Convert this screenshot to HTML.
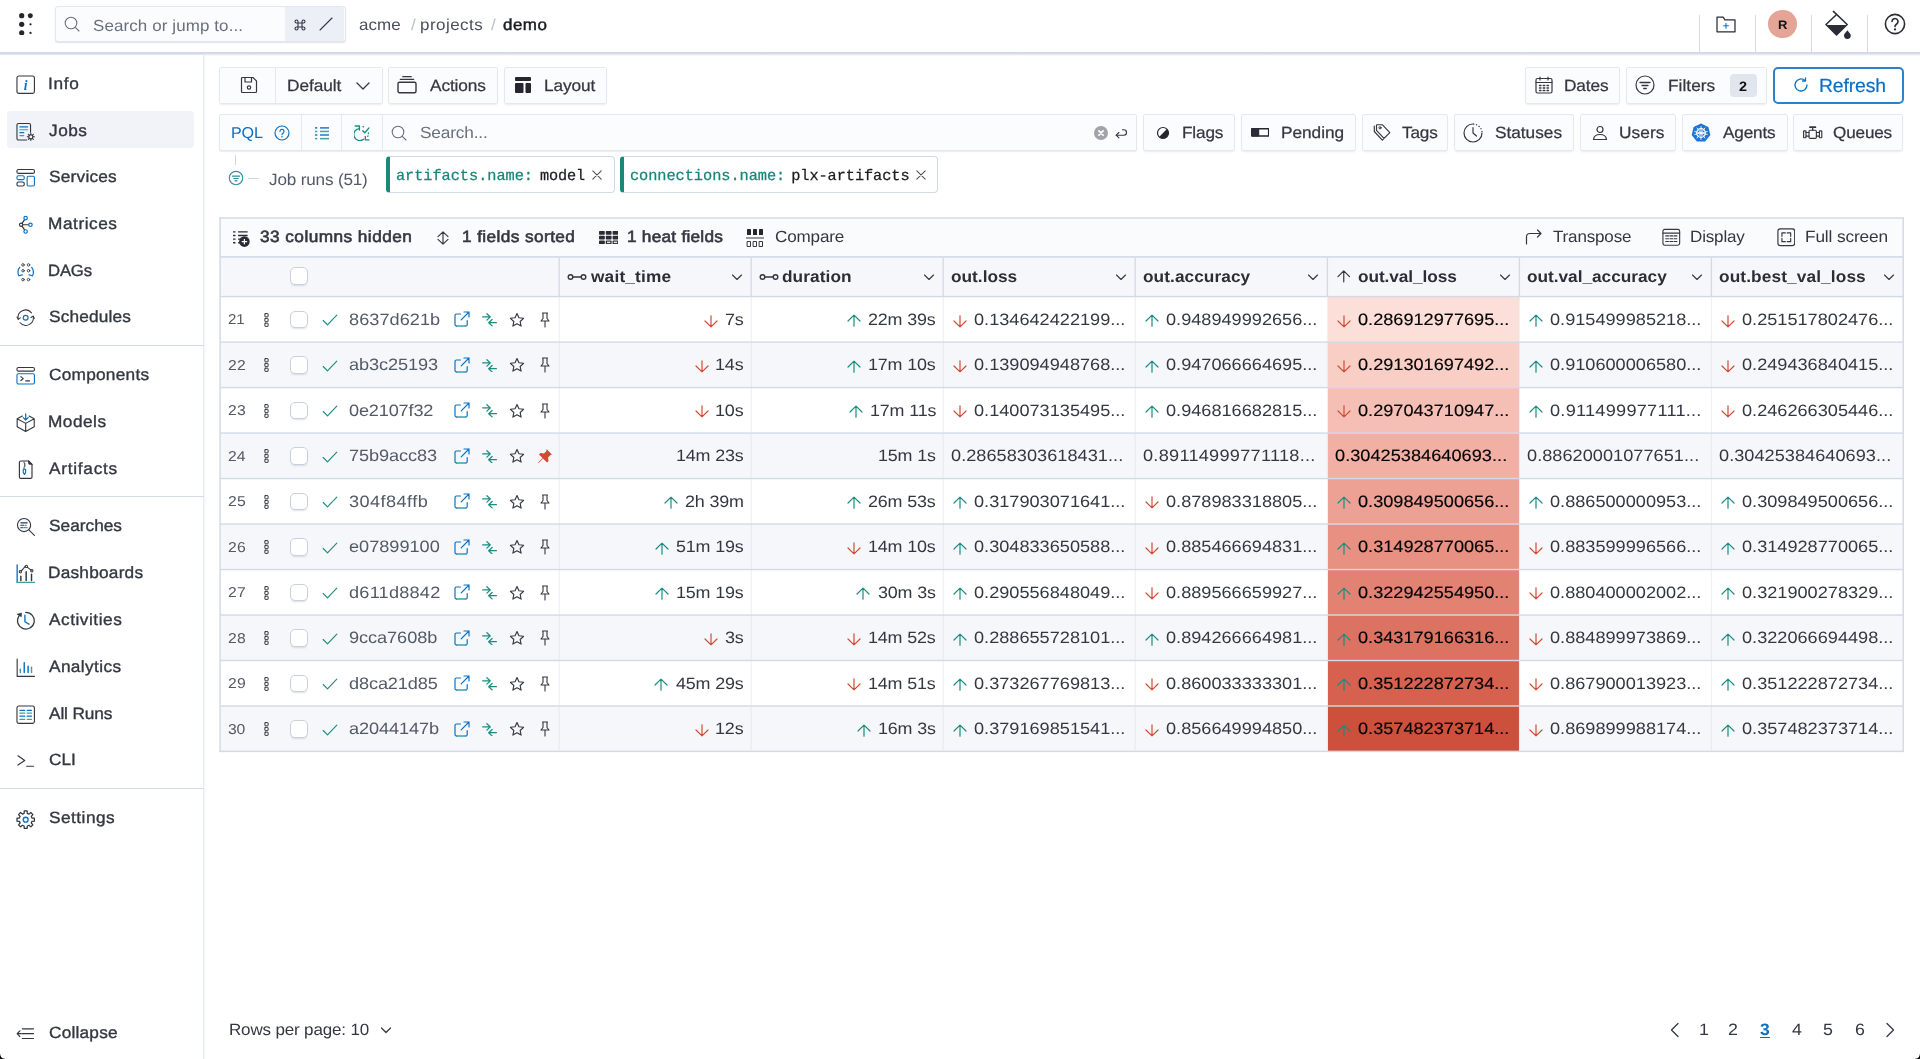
<!DOCTYPE html>
<html lang="en"><head><meta charset="utf-8"><title>demo - Jobs</title>
<style>
*{box-sizing:border-box;margin:0;padding:0}
html,body{width:1920px;height:1059px;overflow:hidden;background:#fff}
body{font-family:"Liberation Sans",sans-serif;color:#343741;font-size:16px;position:relative}
svg{display:block}
.t{position:absolute;white-space:nowrap;line-height:20px;color:#343741;text-rendering:geometricPrecision;transform-origin:0 50%}
.i{position:absolute}
.bx{position:absolute}
#top{position:absolute;left:0;top:0;width:1920px;height:52px;background:#fff}
#topshadow{position:absolute;left:0;top:52px;width:1920px;height:4px;background:linear-gradient(#cfd7e3 0,#d6dde8 40%,#eef1f6 75%,#fff 100%)}
.gsearch{background:#fbfcfd;border:1px solid #e3e8f0;border-radius:3px;box-shadow:0 1px 1px rgba(152,162,179,.3)}
.gsk{background:#eceff5;border-radius:0 2px 2px 0}
.tsep{background:#d3dae6}
.avatar{position:absolute;width:28.400px;height:28.400px;border-radius:50%;background:#e4a496}
#side{position:absolute;left:0;top:55px;width:204px;height:1004px;background:#fff;border-right:1px solid #e6eaf1;box-shadow:1px 0 2px rgba(152,162,179,.14)}
.navact{background:#f1f3f8;border-radius:4px}
.nsep{background:#d3dae6}
.btn{background:#fbfcfd;border:1px solid #e4e9f1;border-radius:2px;box-shadow:0 2px 2px -1px rgba(152,162,179,.22)}
.btn.flat{box-shadow:0 1px 1px rgba(152,162,179,.2)}
.vsep{background:#e4e9f1}
.badge{background:#e0e5ee;border-radius:4px}
.refresh{background:#fff;border:2px solid #2e80c8;border-radius:5px}
.treel{background:#cfd6e2}
.chip{background:#fff;border:1px solid #d3dae6;border-left:4.500px solid #1a8778;border-radius:4px}
.tbl{background:#fff}
.tbar{background:#fafbfd}
.hline{background:#d3dae6}
.thead{background:#f5f7fb}
.alt{background:#f5f7fb}
.rline{background:#d3dae6}
.hcl{background:#d3dae6}
.ccl{background:rgba(211,218,230,.55)}
.cb{background:#fff;border:1px solid #c9cfdb;border-radius:5px;box-shadow:0 2px 2px -1px rgba(152,162,179,.35)}
.corner{position:absolute;bottom:0;width:5px;height:5px;background:#000}
.corner.bl{left:0;-webkit-mask:radial-gradient(circle at 100% 0,transparent 4.300px,#000 5.300px);mask:radial-gradient(circle at 100% 0,transparent 4.300px,#000 5.300px)}
.corner.br{right:0;-webkit-mask:radial-gradient(circle at 0 0,transparent 4.300px,#000 5.300px);mask:radial-gradient(circle at 0 0,transparent 4.300px,#000 5.300px)}
.grid{position:absolute;left:0;top:0;pointer-events:none}
#w{position:absolute;left:0;top:0;width:1920px;height:1059px;will-change:transform;overflow:hidden}

</style></head><body><div id="w">
<div id="top"></div><div id="topshadow"></div>
<span class="i" style="left:18.8px;top:12.7px"><svg width="14" height="22.6" viewBox="0 0 14 22.6" fill="none" ><g fill="#25262d"><circle cx="2.700" cy="2.700" r="2.600"/><circle cx="11.300" cy="2.700" r="2.500"/><circle cx="2.700" cy="11.300" r="2.600"/><circle cx="11.500" cy="11.300" r="1.150"/><circle cx="2.700" cy="19.900" r="2.600"/><circle cx="11.500" cy="19.900" r="1.150"/></g></svg></span>
<div class="bx gsearch" style="left:55px;top:6px;width:290.5px;height:36.3px;"></div>
<div class="bx gsk" style="left:284.6px;top:7px;width:59.9px;height:34.3px;"></div>
<span class="i" style="left:64.4px;top:16.2px"><svg width="16" height="16" viewBox="0 0 16 16" fill="none" ><circle cx="7" cy="7" r="5.800" stroke="#69707d" stroke-width="1.1" stroke-linecap="round" stroke-linejoin="round"/><path d="M11.300 11.300l3.700 3.700" stroke="#69707d" stroke-width="1.1" stroke-linecap="round" stroke-linejoin="round"/></svg></span>
<span class="t" style="left:93.34px;top:17px;font-size:16px;letter-spacing:0.1px;transform:scaleX(1.06);color:#69707d;">Search or jump to...</span>
<span class="i" style="left:294px;top:19px"><svg width="12" height="12" viewBox="0 0 12 12" fill="none" ><path d="M4 4h4v4H4zM4 4V2.500a1.500 1.500 0 1 0-1.500 1.500zM8 4V2.500a1.500 1.500 0 1 1 1.500 1.500zM4 8v1.500a1.500 1.500 0 1 1-1.500-1.500zM8 8v1.500a1.500 1.500 0 1 0 1.500-1.500z" stroke="#343741" stroke-width="1.1" stroke-linecap="round" stroke-linejoin="round"/></svg></span>
<span class="i" style="left:317.8px;top:15.7px"><svg width="16" height="16" viewBox="0 0 16 16" fill="none" ><path d="M2 14L14 2" stroke="#343741" stroke-width="1.1" stroke-linecap="round" stroke-linejoin="round"/></svg></span>
<span class="t" style="left:358.92px;top:16px;font-size:16px;letter-spacing:0.09px;transform:scaleX(1.06);color:#4a4f5b;">acme</span>
<span class="t" style="left:410.7px;top:16px;font-size:16px;transform:scaleX(1.06);color:#b9c0cc;">/</span>
<span class="t" style="left:420.28px;top:16px;font-size:16px;letter-spacing:0.44px;transform:scaleX(1.06);color:#4a4f5b;">projects</span>
<span class="t" style="left:490.7px;top:16px;font-size:16px;transform:scaleX(1.06);color:#b9c0cc;">/</span>
<span class="t" style="left:502.82px;top:16px;font-size:16px;letter-spacing:0.46px;transform:scaleX(1.06);color:#1a1c21;-webkit-text-stroke:0.45px #1a1c21;">demo</span>
<div class="bx tsep" style="left:1698.5px;top:15px;width:1px;height:38px;"></div>
<div class="bx tsep" style="left:1754.5px;top:15px;width:1px;height:38px;"></div>
<div class="bx tsep" style="left:1810.8px;top:15px;width:1px;height:38px;"></div>
<div class="bx tsep" style="left:1866.8px;top:15px;width:1px;height:38px;"></div>
<span class="i" style="left:1716.3px;top:15.9px"><svg width="20" height="17" viewBox="0 0 20 17" fill="none" ><path d="M1 1.200h6.200l1.700 2.600h10.100v12H1z" stroke="#2b2d36" stroke-width="1.25" stroke-linecap="round" stroke-linejoin="round"/><path d="M10 7.300v4.800M7.600 9.700h4.800" stroke="#0b72c4" stroke-width="1.1" stroke-linecap="round" stroke-linejoin="round"/></svg></span>
<div class="avatar" style="left:1768.3px;top:9.8px"></div>
<span class="t" style="left:1777.75px;top:15px;font-size:12.3px;transform:scaleX(1.06);font-weight:bold;color:#111;">R</span>
<span class="i" style="left:1825px;top:9.5px"><svg width="27" height="29" viewBox="0 0 27 29" fill="none" ><path d="M8.400 1.400L22.200 14.500 11.500 24.900 1 14.500 11.300 4.800" stroke="#2b2d36" stroke-width="1.5" stroke-linecap="round" stroke-linejoin="round"/><path d="M1.800 15h19.800L11.500 24.900z" fill="#2b2d36"/><path d="M22.400 20.300c-2 2.600-3.400 3.700-3.400 5.200a3.400 3.400 0 0 0 6.800 0c0-1.500-1.400-2.600-3.400-5.200z" fill="#2b2d36"/></svg></span>
<span class="i" style="left:1883.5px;top:13.2px"><svg width="22" height="22" viewBox="0 0 22 22" fill="none" ><circle cx="11" cy="11" r="9.600" stroke="#2b2d36" stroke-width="1.6" stroke-linecap="round" stroke-linejoin="round"/><path d="M8 8.500a3 3 0 1 1 4.700 2.500c-1.200.800-1.700 1.300-1.700 2.600" stroke="#2b2d36" stroke-width="1.6" stroke-linecap="round" stroke-linejoin="round"/><circle cx="11" cy="16.400" r="1.100" fill="#2b2d36"/></svg></span>
<div id="side"></div>
<div class="bx navact" style="left:7px;top:111px;width:186.6px;height:37px;"></div>
<span class="i" style="left:15.8px;top:74.9px"><svg width="19.4" height="19.4" viewBox="0 0 20 20" fill="none" ><rect x="1" y="1" width="18" height="18" rx="2" stroke="#343741" stroke-width="1.15" stroke-linecap="round" stroke-linejoin="round"/><text x="10" y="15" font-family="Liberation Serif" font-style="italic" font-weight="bold" font-size="14" text-anchor="middle" fill="#0b72c4">i</text></svg></span>
<span class="t" style="left:48.04px;top:74px;font-size:16.3px;letter-spacing:0.68px;transform:scaleX(1.06);-webkit-text-stroke:0.35px #343741;">Info</span>
<span class="i" style="left:15.8px;top:121.7px"><svg width="19.4" height="19.4" viewBox="0 0 20 20" fill="none" ><path d="M11 18.5H2.5a1.5 1.5 0 0 1-1.5-1.5V3A1.5 1.5 0 0 1 2.5 1.500h11A1.500 1.500 0 0 1 15 3v7.500" stroke="#343741" stroke-width="1.15" stroke-linecap="round" stroke-linejoin="round"/><path d="M4 5h8M4 11h4" stroke="#0b72c4" stroke-width="1.2" stroke-linecap="round" stroke-linejoin="round"/><path d="M4 8h8M4 14h4" stroke="#3f9fa3" stroke-width="1.2" stroke-linecap="round" stroke-linejoin="round"/><circle cx="15.300" cy="15.300" r="2.100" stroke="#343741" stroke-width="1.1" stroke-linecap="round" stroke-linejoin="round"/><path d="M15.300 11.600v1.400M15.300 17.600v1.400M11.600 15.300h1.400M17.600 15.300h1.400M12.700 12.700l1 1M16.900 16.900l1 1M12.700 17.900l1-1M16.900 13.700l1-1" stroke="#343741" stroke-width="1.1" stroke-linecap="round" stroke-linejoin="round"/></svg></span>
<span class="t" style="left:49.34px;top:121px;font-size:16.3px;letter-spacing:0.47px;transform:scaleX(1.06);-webkit-text-stroke:0.35px #343741;">Jobs</span>
<span class="i" style="left:15.8px;top:168.3px"><svg width="19.4" height="19.4" viewBox="0 0 20 20" fill="none" ><rect x="1" y="1.500" width="18" height="4" rx="1.500" stroke="#343741" stroke-width="1.15" stroke-linecap="round" stroke-linejoin="round"/><rect x="1" y="14.500" width="7.500" height="4" rx="1.500" stroke="#343741" stroke-width="1.15" stroke-linecap="round" stroke-linejoin="round"/><rect x="1" y="8" width="7.500" height="4" rx="1.500" stroke="#0b72c4" stroke-width="1.15" stroke-linecap="round" stroke-linejoin="round"/><rect x="11.500" y="8.500" width="7.500" height="10" rx="1.200" stroke="#0b72c4" stroke-width="1.15" stroke-linecap="round" stroke-linejoin="round"/></svg></span>
<span class="t" style="left:48.82px;top:167px;font-size:16.3px;letter-spacing:0.21px;transform:scaleX(1.06);-webkit-text-stroke:0.35px #343741;">Services</span>
<span class="i" style="left:15.8px;top:215px"><svg width="19.4" height="19.4" viewBox="0 0 20 20" fill="none" ><circle cx="5.300" cy="10.100" r="1.700" stroke="#343741" stroke-width="1.2" stroke-linecap="round" stroke-linejoin="round"/><path d="M7 10.100h6M6.300 8.700l2.500-3.900M6.300 11.500l2.500 3.900" stroke="#343741" stroke-width="1.2" stroke-linecap="round" stroke-linejoin="round"/><circle cx="9.900" cy="3.200" r="1.800" stroke="#0b72c4" stroke-width="1.2" stroke-linecap="round" stroke-linejoin="round"/><circle cx="14.900" cy="10.100" r="1.800" stroke="#0b72c4" stroke-width="1.2" stroke-linecap="round" stroke-linejoin="round"/><circle cx="9.900" cy="17" r="1.800" stroke="#0b72c4" stroke-width="1.2" stroke-linecap="round" stroke-linejoin="round"/></svg></span>
<span class="t" style="left:48.22px;top:214px;font-size:16.3px;letter-spacing:0.51px;transform:scaleX(1.06);-webkit-text-stroke:0.35px #343741;">Matrices</span>
<span class="i" style="left:15.8px;top:262.4px"><svg width="19.4" height="19.4" viewBox="0 0 20 20" fill="none" ><g stroke="#343741" stroke-width="0.9" stroke-linecap="round" stroke-linejoin="round"><circle cx="7.200" cy="3" r="1.300"/><circle cx="12.900" cy="3" r="1.300"/><circle cx="7.200" cy="9" r="1.300"/><circle cx="12.900" cy="9" r="1.300"/><circle cx="7.200" cy="18.200" r="1.300"/><circle cx="12.900" cy="18.200" r="1.300"/></g><path d="M3.800 5.500C1.600 8 1.600 12 3 14.200M3 14.200l3.500-1M16.200 5.500c2.200 2.500 2.200 6.500.8 8.700M17 14.200l-3.500-1" stroke="#0b72c4" stroke-width="1.3" stroke-linecap="round" stroke-linejoin="round"/></svg></span>
<span class="t" style="left:48.26px;top:261px;font-size:16.3px;letter-spacing:-0.15px;transform:scaleX(1.024);-webkit-text-stroke:0.35px #343741;">DAGs</span>
<span class="i" style="left:15.8px;top:308.4px"><svg width="19.4" height="19.4" viewBox="0 0 20 20" fill="none" ><path d="M2.300 11.500A7.800 7.800 0 0 1 16 5M17.700 8.500A7.800 7.800 0 0 1 4 15" stroke="#343741" stroke-width="1.05" stroke-linecap="round" stroke-linejoin="round"/><path d="M1 9.300l1.300 2.400 2.200-1.500M19 10.700l-1.300-2.400-2.200 1.500" stroke="#343741" stroke-width="1.05" stroke-linecap="round" stroke-linejoin="round"/><circle cx="10" cy="10" r="2.500" stroke="#0b72c4" stroke-width="1.25" stroke-linecap="round" stroke-linejoin="round"/></svg></span>
<span class="t" style="left:48.82px;top:307px;font-size:16.3px;letter-spacing:0.16px;transform:scaleX(1.06);-webkit-text-stroke:0.35px #343741;">Schedules</span>
<span class="i" style="left:15.8px;top:366px"><svg width="19.4" height="19.4" viewBox="0 0 20 20" fill="none" ><rect x="1" y="1.500" width="18" height="3.800" rx="1.500" stroke="#343741" stroke-width="1.15" stroke-linecap="round" stroke-linejoin="round"/><rect x="1" y="8" width="18" height="10.500" rx="1.500" stroke="#0b72c4" stroke-width="1.15" stroke-linecap="round" stroke-linejoin="round"/><path d="M5 11l2.500 2L5 15M10 15.300h4" stroke="#343741" stroke-width="1.2" stroke-linecap="round" stroke-linejoin="round"/></svg></span>
<span class="t" style="left:48.74px;top:365px;font-size:16.3px;letter-spacing:0.23px;transform:scaleX(1.06);-webkit-text-stroke:0.35px #343741;">Components</span>
<span class="i" style="left:15.8px;top:412.7px"><svg width="19.4" height="19.4" viewBox="0 0 20 20" fill="none" ><path d="M6.500 3.200L1.200 6v8.300L10 19l8.800-4.700V6l-5.300-2.800M1.200 6L10 10.700 18.800 6M10 10.700V19" stroke="#343741" stroke-width="1.15" stroke-linecap="round" stroke-linejoin="round"/><path d="M10 1v6M7.500 4.800L10 7.200l2.500-2.400" stroke="#0b72c4" stroke-width="1.3" stroke-linecap="round" stroke-linejoin="round"/></svg></span>
<span class="t" style="left:48.22px;top:412px;font-size:16.3px;letter-spacing:0.45px;transform:scaleX(1.06);-webkit-text-stroke:0.35px #343741;">Models</span>
<span class="i" style="left:15.8px;top:459.8px"><svg width="19.4" height="19.4" viewBox="0 0 20 20" fill="none" ><path d="M13 1H5A1.500 1.500 0 0 0 3.500 2.500v15A1.500 1.500 0 0 0 5 19h10a1.500 1.500 0 0 0 1.500-1.500V4.500z" stroke="#343741" stroke-width="1.2" stroke-linecap="round" stroke-linejoin="round"/><path d="M13 1v2.500a1 1 0 0 0 1 1h2.500z" fill="#343741" stroke="#343741" stroke-width="0.8" stroke-linecap="round" stroke-linejoin="round"/><path d="M8.300 2v1.300l1.400.9-1.400.9 1.400.9-1.400.9V9" stroke="#343741" stroke-width="0.9" stroke-linecap="round" stroke-linejoin="round"/><path d="M7.500 9.500h2.400V13L8.700 15 7.500 13z" stroke="#0b72c4" stroke-width="1.2" stroke-linecap="round" stroke-linejoin="round"/></svg></span>
<span class="t" style="left:49.1px;top:459px;font-size:16.3px;letter-spacing:0.69px;transform:scaleX(1.06);-webkit-text-stroke:0.35px #343741;">Artifacts</span>
<span class="i" style="left:15.8px;top:517.3px"><svg width="19.4" height="19.4" viewBox="0 0 20 20" fill="none" ><circle cx="8.300" cy="8.300" r="6.800" stroke="#343741" stroke-width="1.15" stroke-linecap="round" stroke-linejoin="round"/><path d="M13.500 13.500L19 19" stroke="#343741" stroke-width="1.15" stroke-linecap="round" stroke-linejoin="round"/><path d="M5 6h6.500M5 8.500h3" stroke="#343741" stroke-width="1.2" stroke-linecap="round" stroke-linejoin="round"/><path d="M9.500 8.500h1M5 11h2" stroke="#0b72c4" stroke-width="1.2" stroke-linecap="round" stroke-linejoin="round"/><path d="M8 11h3.500" stroke="#3f9fa3" stroke-width="1.2" stroke-linecap="round" stroke-linejoin="round"/></svg></span>
<span class="t" style="left:48.82px;top:516px;font-size:16.3px;letter-spacing:0.01px;transform:scaleX(1.06);-webkit-text-stroke:0.35px #343741;">Searches</span>
<span class="i" style="left:15.8px;top:564px"><svg width="19.4" height="19.4" viewBox="0 0 20 20" fill="none" ><path d="M1.200 1v18" stroke="#0b72c4" stroke-width="1.4" stroke-linecap="round" stroke-linejoin="round"/><path d="M1.200 19H19" stroke="#3f9fa3" stroke-width="1.4" stroke-linecap="round" stroke-linejoin="round"/><path d="M5 17v-4.500M10.500 17V8M16 17v-6.500" stroke="#343741" stroke-width="1.5" stroke-linecap="round" stroke-linejoin="round"/><path d="M5.500 7l4-4.500M12 3.500l3.500 2.800" stroke="#343741" stroke-width="1.1" stroke-linecap="round" stroke-linejoin="round"/><circle cx="4.500" cy="8" r="1.200" stroke="#343741" stroke-width="1.1" stroke-linecap="round" stroke-linejoin="round"/><circle cx="10.700" cy="2.500" r="1.200" stroke="#343741" stroke-width="1.1" stroke-linecap="round" stroke-linejoin="round"/><circle cx="16.300" cy="7" r="1.200" stroke="#343741" stroke-width="1.1" stroke-linecap="round" stroke-linejoin="round"/></svg></span>
<span class="t" style="left:48.22px;top:563px;font-size:16.3px;letter-spacing:0.21px;transform:scaleX(1.06);-webkit-text-stroke:0.35px #343741;">Dashboards</span>
<span class="i" style="left:15.8px;top:610.7px"><svg width="19.4" height="19.4" viewBox="0 0 20 20" fill="none" ><path d="M10 1.400A8.600 8.600 0 1 1 3.200 5" stroke="#343741" stroke-width="1.3" stroke-linecap="round" stroke-linejoin="round"/><path d="M1.100 3.400L5.700 2 5.500 5.900z" fill="#343741" stroke="#343741" stroke-width=".600" stroke-linejoin="round"/><path d="M9.200 4.300v6.800l4.200 2.500" stroke="#0b72c4" stroke-width="1.4" stroke-linecap="round" stroke-linejoin="round"/></svg></span>
<span class="t" style="left:49.1px;top:610px;font-size:16.3px;letter-spacing:0.49px;transform:scaleX(1.06);-webkit-text-stroke:0.35px #343741;">Activities</span>
<span class="i" style="left:15.8px;top:657.8px"><svg width="19.4" height="19.4" viewBox="0 0 20 20" fill="none" ><path d="M1.200 1v18H19" stroke="#343741" stroke-width="1.15" stroke-linecap="round" stroke-linejoin="round"/><path d="M8.500 15V5M12.500 15V8.500" stroke="#0b72c4" stroke-width="1.5" stroke-linecap="round" stroke-linejoin="round"/><path d="M4.500 15v-3M16 15V9.500" stroke="#3f9fa3" stroke-width="1.5" stroke-linecap="round" stroke-linejoin="round"/><path d="M4.500 12.500v-1" stroke="#3f9fa3" stroke-width="1.5" stroke-linecap="round" stroke-linejoin="round"/></svg></span>
<span class="t" style="left:49.1px;top:657px;font-size:16.3px;letter-spacing:0.36px;transform:scaleX(1.06);-webkit-text-stroke:0.35px #343741;">Analytics</span>
<span class="i" style="left:15.8px;top:704.6px"><svg width="19.4" height="19.4" viewBox="0 0 20 20" fill="none" ><rect x="1" y="1" width="18" height="18" rx="2" stroke="#343741" stroke-width="1.15" stroke-linecap="round" stroke-linejoin="round"/><path d="M4 5.500h5M11.500 5.500H16M4 11.500h5M11.500 11.500H16" stroke="#0b72c4" stroke-width="1.3" stroke-linecap="round" stroke-linejoin="round"/><path d="M4 8.500h5M11.500 8.500H16M4 14.800h5M11.500 14.800H16" stroke="#3f9fa3" stroke-width="1.3" stroke-linecap="round" stroke-linejoin="round"/></svg></span>
<span class="t" style="left:49.1px;top:704px;font-size:16.3px;letter-spacing:-0.12px;transform:scaleX(1.06);-webkit-text-stroke:0.35px #343741;">All Runs</span>
<span class="i" style="left:15.8px;top:750.8px"><svg width="19.4" height="19.4" viewBox="0 0 20 20" fill="none" ><path d="M2 5l7 4.700L2 14.500M11 15.700h7" stroke="#343741" stroke-width="1.2" stroke-linecap="round" stroke-linejoin="round"/></svg></span>
<span class="t" style="left:48.74px;top:750px;font-size:16.3px;letter-spacing:-0.06px;transform:scaleX(1.06);-webkit-text-stroke:0.35px #343741;">CLI</span>
<span class="i" style="left:15.9px;top:809.5px"><svg width="19.4" height="19.4" viewBox="0 0 20 20" fill="none" ><path d="M8.38 3.50 L8.50 1.02 L11.50 1.02 L11.62 3.50 L13.45 4.26 L15.28 2.59 L17.41 4.72 L15.74 6.55 L16.50 8.38 L18.98 8.50 L18.98 11.50 L16.50 11.62 L15.74 13.45 L17.41 15.28 L15.28 17.41 L13.45 15.74 L11.62 16.50 L11.50 18.98 L8.50 18.98 L8.38 16.50 L6.55 15.74 L4.72 17.41 L2.59 15.28 L4.26 13.45 L3.50 11.62 L1.02 11.50 L1.02 8.50 L3.50 8.38 L4.26 6.55 L2.59 4.72 L4.72 2.59 L6.55 4.26z" stroke="#343741" stroke-width="1.3" stroke-linecap="round" stroke-linejoin="round"/><circle cx="10" cy="10" r="2.500" stroke="#0b72c4" stroke-width="1.4" stroke-linecap="round" stroke-linejoin="round"/></svg></span>
<span class="t" style="left:48.82px;top:808px;font-size:16.3px;letter-spacing:0.45px;transform:scaleX(1.06);-webkit-text-stroke:0.35px #343741;">Settings</span>
<span class="i" style="left:15.8px;top:1023.7px"><svg width="19.4" height="19.4" viewBox="0 0 20 20" fill="none" ><path d="M6.500 5H18M6.500 10H18M6.500 15H18" stroke="#343741" stroke-width="1.2" stroke-linecap="round" stroke-linejoin="round"/><path d="M1.500 10h4M4 7L1.200 10 4 13" stroke="#343741" stroke-width="1.2" stroke-linecap="round" stroke-linejoin="round"/></svg></span>
<span class="t" style="left:48.74px;top:1023px;font-size:16.3px;letter-spacing:0.19px;transform:scaleX(1.06);-webkit-text-stroke:0.35px #343741;">Collapse</span>
<div class="bx nsep" style="left:0px;top:344.5px;width:203.5px;height:1.2px;"></div>
<div class="bx nsep" style="left:0px;top:495.5px;width:203.5px;height:1.2px;"></div>
<div class="bx nsep" style="left:0px;top:787.5px;width:203.5px;height:1.2px;"></div>
<div class="bx btn" style="left:219px;top:67px;width:163.8px;height:37px;"></div>
<div class="bx vsep" style="left:274.5px;top:68px;width:1px;height:35px;"></div>
<span class="i" style="left:239.5px;top:76.4px"><svg width="18" height="18" viewBox="0 0 18 18" fill="none" ><path d="M2.500 1.500h10.500l3.500 3.500v10.500a1 1 0 0 1-1 1h-13a1 1 0 0 1-1-1v-13a1 1 0 0 1 1-1z" stroke="#343741" stroke-width="1.2" stroke-linecap="round" stroke-linejoin="round"/><path d="M5 1.500v4.500h6.500V1.500" stroke="#343741" stroke-width="1.2" stroke-linecap="round" stroke-linejoin="round"/><circle cx="9" cy="11.500" r="1.700" stroke="#343741" stroke-width="1.2" stroke-linecap="round" stroke-linejoin="round"/></svg></span>
<span class="t" style="left:286.92px;top:76px;font-size:16.3px;letter-spacing:-0.05px;transform:scaleX(1.06);-webkit-text-stroke:0.25px #343741;">Default</span>
<span class="i" style="left:355.2px;top:78px"><svg width="16" height="16" viewBox="0 0 16 16" fill="none" ><path d="M2 5l6 6 6-6" stroke="#343741" stroke-width="1.3" stroke-linecap="round" stroke-linejoin="round"/></svg></span>
<div class="bx btn" style="left:388.3px;top:67px;width:110px;height:37px;"></div>
<span class="i" style="left:397.3px;top:75.2px"><svg width="20" height="20" viewBox="0 0 20 20" fill="none" ><rect x="1" y="7.300" width="18" height="10.500" rx="1.500" stroke="#343741" stroke-width="1.4" stroke-linecap="round" stroke-linejoin="round"/><path d="M3.300 4.300h13.400M5.800 1.700h8.400" stroke="#343741" stroke-width="1.3" stroke-linecap="round" stroke-linejoin="round"/></svg></span>
<span class="t" style="left:429.6px;top:76px;font-size:16.3px;letter-spacing:-0.1px;transform:scaleX(1.06);-webkit-text-stroke:0.25px #343741;">Actions</span>
<div class="bx btn" style="left:503.8px;top:67px;width:103.2px;height:37px;"></div>
<span class="i" style="left:514.4px;top:76.3px"><svg width="18" height="18" viewBox="0 0 18 18" fill="none" ><g fill="#26272e"><rect x="1" y="1" width="16" height="4" rx="1"/><rect x="1" y="7" width="8.500" height="10" rx="1"/><rect x="11.500" y="7" width="5.500" height="10" rx="1"/></g></svg></span>
<span class="t" style="left:543.82px;top:76px;font-size:16.3px;letter-spacing:-0.12px;transform:scaleX(1.06);-webkit-text-stroke:0.25px #343741;">Layout</span>
<div class="bx btn" style="left:1524.5px;top:67px;width:95.5px;height:37px;"></div>
<span class="i" style="left:1535.3px;top:76.2px"><svg width="18" height="18" viewBox="0 0 18 18" fill="none" ><rect x="1" y="2.500" width="16" height="14.500" rx="1.500" stroke="#343741" stroke-width="1.2" stroke-linecap="round" stroke-linejoin="round"/><path d="M1 6.500h16M5 1v3M13 1v3" stroke="#343741" stroke-width="1.2" stroke-linecap="round" stroke-linejoin="round"/><path d="M4.500 9.500h1.500M8.200 9.500h1.600M12 9.500h1.500M4.500 12h1.500M8.200 12h1.600M12 12h1.500M4.500 14.500h1.500M8.200 14.500h1.600M12 14.500h1.500" stroke="#343741" stroke-width="1.3" stroke-linecap="round" stroke-linejoin="round"/></svg></span>
<span class="t" style="left:1564.22px;top:76px;font-size:16.3px;letter-spacing:-0.1px;transform:scaleX(1.06);-webkit-text-stroke:0.25px #343741;">Dates</span>
<div class="bx btn" style="left:1625.8px;top:67px;width:141.5px;height:37px;"></div>
<span class="i" style="left:1635.3px;top:75.3px"><svg width="20" height="20" viewBox="0 0 20 20" fill="none" ><circle cx="10" cy="10" r="9" stroke="#343741" stroke-width="1.2" stroke-linecap="round" stroke-linejoin="round"/><path d="M5 7.500h10M7 10.500h6M8.700 13.500h2.600" stroke="#343741" stroke-width="1.3" stroke-linecap="round" stroke-linejoin="round"/></svg></span>
<span class="t" style="left:1668.42px;top:76px;font-size:16.3px;letter-spacing:0.03px;transform:scaleX(1.06);-webkit-text-stroke:0.25px #343741;">Filters</span>
<div class="bx badge" style="left:1730px;top:74px;width:26.8px;height:23.3px;"></div>
<span class="t" style="left:1738.87px;top:77px;font-size:13.6px;transform:scaleX(1.06);font-weight:bold;color:#111;">2</span>
<div class="bx refresh" style="left:1773px;top:67px;width:130.5px;height:37px;"></div>
<span class="i" style="left:1793.3px;top:77.2px"><svg width="16" height="16" viewBox="0 0 16 16" fill="none" ><path d="M14 8a6 6 0 1 1-2-4.500" stroke="#0b72c4" stroke-width="1.3" stroke-linecap="round" stroke-linejoin="round"/><path d="M12.500 1v3h-3" stroke="#0b72c4" stroke-width="1.3" stroke-linecap="round" stroke-linejoin="round"/></svg></span>
<span class="t" style="left:1819.25px;top:77px;font-size:19px;letter-spacing:-0.15px;transform:scaleX(1.02);color:#0b6fc2;-webkit-text-stroke:0.2px #0b6fc2;">Refresh</span>
<div class="bx btn flat" style="left:219px;top:114px;width:918.3px;height:37px;"></div>
<div class="bx vsep" style="left:301.2px;top:115px;width:1px;height:35px;"></div>
<div class="bx vsep" style="left:341.4px;top:115px;width:1px;height:35px;"></div>
<div class="bx vsep" style="left:381.5px;top:115px;width:1px;height:35px;"></div>
<span class="t" style="left:231.01px;top:124px;font-size:15.6px;letter-spacing:-0.15px;transform:scaleX(1.0348);color:#0b6fc2;">PQL</span>
<span class="i" style="left:274.1px;top:124.6px"><svg width="16" height="16" viewBox="0 0 16 16" fill="none" ><circle cx="8" cy="8" r="7" stroke="#0b72c4" stroke-width="1.2" stroke-linecap="round" stroke-linejoin="round"/><path d="M6 6.300a2 2 0 1 1 3.200 1.600c-.8.600-1.200.9-1.200 1.800" stroke="#0b72c4" stroke-width="1.2" stroke-linecap="round" stroke-linejoin="round"/><circle cx="8" cy="11.800" r=".8" fill="#0b72c4"/></svg></span>
<span class="i" style="left:314.85px;top:127.1px"><svg width="14.5" height="13" viewBox="0 0 14.5 13" fill="none" ><g fill="#0b72c4"><rect x="0" y=".200" width="2.300" height="1.400"/><rect x="5" y=".200" width="9.500" height="1.400"/><rect x="0" y="7.300" width="2.300" height="1.400"/><rect x="5" y="7.300" width="9.500" height="1.400"/></g><g fill="#4b9fa8"><rect x="0" y="3.700" width="2.300" height="1.500"/><rect x="5" y="3.700" width="9.500" height="1.500"/><rect x="0" y="10.900" width="2.300" height="1.500"/><rect x="5" y="10.900" width="9.500" height="1.500"/></g></svg></span>
<span class="i" style="left:354.4px;top:125.4px"><svg width="16" height="16" viewBox="0 0 16 16" fill="none" ><path d="M5.200 3.600A6 6 0 1 0 9.500 14.300" stroke="#1c8c80" stroke-width="1.35" stroke-linecap="round" stroke-linejoin="round"/><path d="M1.200 1h4.200v4" stroke="#1c8c80" stroke-width="1.35" stroke-linecap="round" stroke-linejoin="round"/><path d="M11.300 11.300v3.600h3.600" stroke="#1c8c80" stroke-width="1.35" stroke-linecap="round" stroke-linejoin="round"/><path d="M14.300 7.500c.3 1.500.1 3-.8 4.300" stroke="#1c8c80" stroke-width="1.300" stroke-dasharray="1.600 1.300"/><path d="M8.500 1.600c1 0 2 .3 2.800.8" stroke="#1c8c80" stroke-width="1.300" stroke-dasharray="1.600 1.300"/><path d="M8.800 5.800l2 2 4.200-4.900" stroke="#1c8c80" stroke-width="1.35" stroke-linecap="round" stroke-linejoin="round"/></svg></span>
<span class="i" style="left:390.7px;top:124.7px"><svg width="16" height="16" viewBox="0 0 16 16" fill="none" ><circle cx="7" cy="7" r="5.800" stroke="#69707d" stroke-width="1.1" stroke-linecap="round" stroke-linejoin="round"/><path d="M11.300 11.300l3.700 3.700" stroke="#69707d" stroke-width="1.1" stroke-linecap="round" stroke-linejoin="round"/></svg></span>
<span class="t" style="left:420.02px;top:123px;font-size:16.3px;letter-spacing:-0.15px;transform:scaleX(1.0585);color:#69707d;">Search...</span>
<span class="i" style="left:1093.5px;top:125.7px"><svg width="14" height="14" viewBox="0 0 14 14" fill="none" ><circle cx="7" cy="7" r="7" fill="#a0a3a8"/><path d="M4.900 4.900l4.200 4.200M9.100 4.900L4.900 9.100" stroke="#fff" stroke-width="1.700" stroke-linecap="round"/></svg></span>
<span class="i" style="left:1114.7px;top:128.1px"><svg width="13" height="11" viewBox="0 0 13 11" fill="none" ><path d="M1.200 7.200h7.600a2.700 2.700 0 0 0 0-5.400H7.500" stroke="#343741" stroke-width="1.1" stroke-linecap="round" stroke-linejoin="round"/><path d="M3.900 4.500L1.200 7.200l2.700 2.700" stroke="#343741" stroke-width="1.1" stroke-linecap="round" stroke-linejoin="round"/></svg></span>
<div class="bx btn" style="left:1142.7px;top:114px;width:92.3px;height:37px;"></div>
<span class="i" style="left:1155.7px;top:125.7px"><svg width="14" height="14" viewBox="0 0 14 14" fill="none" ><circle cx="7" cy="7" r="5.500" stroke="#26272e" stroke-width="1.2" stroke-linecap="round" stroke-linejoin="round"/><path d="M3.100 10.900A5.500 5.500 0 0 0 10.900 3.100z" fill="#26272e"/></svg></span>
<span class="t" style="left:1182.42px;top:123px;font-size:16.3px;letter-spacing:-0.15px;transform:scaleX(1.0567);-webkit-text-stroke:0.25px #343741;">Flags</span>
<div class="bx btn" style="left:1240.6px;top:114px;width:115.4px;height:37px;"></div>
<span class="i" style="left:1250.8px;top:128.3px"><svg width="18.4" height="8.8" viewBox="0 0 18.4 8.8" fill="none" ><rect x=".700" y=".700" width="17" height="7.400" rx=".800" stroke="#25262d" stroke-width="1.5" stroke-linecap="round" stroke-linejoin="round"/><rect x=".200" y=".200" width="8" height="8.400" rx=".800" fill="#2b2d36"/></svg></span>
<span class="t" style="left:1280.52px;top:123px;font-size:16.3px;letter-spacing:-0.03px;transform:scaleX(1.06);-webkit-text-stroke:0.25px #343741;">Pending</span>
<div class="bx btn" style="left:1361.7px;top:114px;width:86.6px;height:37px;"></div>
<span class="i" style="left:1371.5px;top:123.2px"><svg width="19" height="19" viewBox="0 0 19 19" fill="none" ><path d="M5 1.700h5.300l7.500 8-5.800 5.700-7.500-8V2.200a.5.500 0 0 1 .5-.5z" stroke="#343741" stroke-width="1.15" stroke-linecap="round" stroke-linejoin="round"/><path d="M2.300 3v5.500l8 8.600 1-.9" stroke="#343741" stroke-width="1.15" stroke-linecap="round" stroke-linejoin="round"/><circle cx="8" cy="4.800" r="1.100" stroke="#343741" stroke-width="1" stroke-linecap="round" stroke-linejoin="round"/></svg></span>
<span class="t" style="left:1401.56px;top:123px;font-size:16.3px;letter-spacing:-0.15px;transform:scaleX(1.0531);-webkit-text-stroke:0.25px #343741;">Tags</span>
<div class="bx btn" style="left:1454px;top:114px;width:120.3px;height:37px;"></div>
<span class="i" style="left:1463.3px;top:122.7px"><svg width="20" height="20" viewBox="0 0 20 20" fill="none" ><path d="M10 1a9 9 0 1 0 9 9" stroke="#343741" stroke-width="1.2" stroke-linecap="round" stroke-linejoin="round"/><path d="M10 1a9 9 0 0 1 9 9" stroke="#343741" stroke-width="1.200" stroke-dasharray="1.300 1.700"/><path d="M10 4.500V10l3.500 3" stroke="#343741" stroke-width="1.2" stroke-linecap="round" stroke-linejoin="round"/></svg></span>
<span class="t" style="left:1494.52px;top:123px;font-size:16.3px;letter-spacing:-0.02px;transform:scaleX(1.06);-webkit-text-stroke:0.25px #343741;">Statuses</span>
<div class="bx btn" style="left:1580px;top:114px;width:96px;height:37px;"></div>
<span class="i" style="left:1591.8px;top:124.7px"><svg width="16" height="16" viewBox="0 0 16 16" fill="none" ><circle cx="8" cy="4.500" r="3" stroke="#343741" stroke-width="1.2" stroke-linecap="round" stroke-linejoin="round"/><path d="M1.500 14.500c.3-3 2.300-5 6.500-5s6.200 2 6.500 5z" stroke="#343741" stroke-width="1.2" stroke-linecap="round" stroke-linejoin="round"/></svg></span>
<span class="t" style="left:1619.1px;top:123px;font-size:16.3px;letter-spacing:0.1px;transform:scaleX(1.06);-webkit-text-stroke:0.25px #343741;">Users</span>
<div class="bx btn" style="left:1681.7px;top:114px;width:106px;height:37px;"></div>
<span class="i" style="left:1691.3px;top:122.7px"><svg width="20" height="20" viewBox="0 0 20 20" fill="none" ><path d="M10 .5l7.400 3.600 1.900 8-5.200 6.500H5.900L.7 12.100l1.900-8z" fill="#1a76d2"/><circle cx="10" cy="10" r="4.300" stroke="#fff" stroke-width="1.200"/><circle cx="10" cy="10" r="1.100" fill="#fff"/><path d="M10 3.200v13.600M3.400 8.500l13.200 3M3.400 11.500l13.200-3M5.800 4.700l8.400 10.600M14.200 4.700L5.800 15.300" stroke="#fff" stroke-width=".9"/></svg></span>
<span class="t" style="left:1722.8px;top:123px;font-size:16.3px;letter-spacing:-0.15px;transform:scaleX(1.0555);-webkit-text-stroke:0.25px #343741;">Agents</span>
<div class="bx btn" style="left:1793.3px;top:114px;width:110px;height:37px;"></div>
<span class="i" style="left:1803.3px;top:126.2px"><svg width="19.4" height="13" viewBox="0 0 19.4 13" fill="none" ><rect x=".600" y="4.800" width="2.400" height="7" rx=".500" stroke="#343741" stroke-width="1.15" stroke-linecap="round" stroke-linejoin="round"/><rect x="16.400" y="4.800" width="2.400" height="7" rx=".500" stroke="#343741" stroke-width="1.15" stroke-linecap="round" stroke-linejoin="round"/><path d="M3 6.500h3M3 10.200h3M13.400 6.500h3M13.400 10.200h3" stroke="#343741" stroke-width="1.15" stroke-linecap="round" stroke-linejoin="round"/><rect x="6" y="4.200" width="7.400" height="8.200" rx="1.200" stroke="#343741" stroke-width="1.15" stroke-linecap="round" stroke-linejoin="round"/><path d="M9.700 4.200V2" stroke="#343741" stroke-width="1.3" stroke-linecap="round" stroke-linejoin="round"/><path d="M7 1.200h5.400" stroke="#343741" stroke-width="1.8" stroke-linecap="round" stroke-linejoin="round"/></svg></span>
<span class="t" style="left:1833.03px;top:123px;font-size:16.3px;letter-spacing:-0.15px;transform:scaleX(1.0512);-webkit-text-stroke:0.25px #343741;">Queues</span>
<div class="bx treel" style="left:235px;top:155.3px;width:1px;height:9.7px;"></div>
<div class="bx treel" style="left:248.3px;top:178.2px;width:10.3px;height:1px;"></div>
<span class="i" style="left:227.7px;top:170.3px"><svg width="16" height="16" viewBox="0 0 16 16" fill="none" ><circle cx="8" cy="8" r="6.700" stroke="#3593a0" stroke-width="1.15" stroke-linecap="round" stroke-linejoin="round"/><path d="M4.500 6.200h7M5.800 8.500h4.400M7 10.800h2" stroke="#2a8f95" stroke-width="1.2" stroke-linecap="round" stroke-linejoin="round"/></svg></span>
<span class="t" style="left:269.04px;top:170px;font-size:16.3px;letter-spacing:-0.15px;transform:scaleX(1.0498);color:#535966;">Job runs (51)</span>
<div class="bx chip" style="left:386px;top:156.4px;width:228.7px;height:36.6px;"></div>
<span class="t" style="left:395.88px;top:166px;font-size:15.3px;letter-spacing:-0.04px;color:#17857a;-webkit-text-stroke:0.25px #17857a;font-family:'Liberation Mono',monospace;">artifacts.name:</span>
<span class="t" style="left:539.92px;top:166px;font-size:15.3px;letter-spacing:-0.15px;transform:scaleX(0.9938);color:#1a1c21;-webkit-text-stroke:0.25px #1a1c21;font-family:'Liberation Mono',monospace;">model</span>
<span class="i" style="left:591.2px;top:168.9px"><svg width="12" height="12" viewBox="0 0 12 12" fill="none" ><path d="M1.800 1.800l8.400 8.400M10.200 1.800l-8.400 8.400" stroke="#4a4f5b" stroke-width="1.05" stroke-linecap="round" stroke-linejoin="round"/></svg></span>
<div class="bx chip" style="left:620px;top:156.4px;width:318px;height:36.6px;"></div>
<span class="t" style="left:629.88px;top:166px;font-size:15.3px;letter-spacing:-0.04px;color:#17857a;-webkit-text-stroke:0.25px #17857a;font-family:'Liberation Mono',monospace;">connections.name:</span>
<span class="t" style="left:791.2px;top:166px;font-size:15.3px;letter-spacing:-0.08px;color:#1a1c21;-webkit-text-stroke:0.25px #1a1c21;font-family:'Liberation Mono',monospace;">plx-artifacts</span>
<span class="i" style="left:914.9px;top:168.9px"><svg width="12" height="12" viewBox="0 0 12 12" fill="none" ><path d="M1.800 1.800l8.400 8.400M10.200 1.800l-8.400 8.400" stroke="#4a4f5b" stroke-width="1.05" stroke-linecap="round" stroke-linejoin="round"/></svg></span>
<div class="bx tbl" style="left:220px;top:218px;width:1683px;height:533px;"></div>
<div class="bx tbar" style="left:220px;top:218px;width:1683px;height:39px;"></div>
<div class="bx thead" style="left:220px;top:257px;width:1683px;height:40px;"></div>
<span class="i" style="left:233.1px;top:231.1px"><svg width="17" height="16" viewBox="0 0 17 16" fill="none" ><g fill="#2b2d36"><rect x="0" y=".200" width="2.600" height="1.400" rx=".400"/><rect x="0" y="3.800" width="2.600" height="1.400" rx=".400"/><rect x="0" y="7.400" width="2.600" height="1.400" rx=".400"/><rect x="0" y="11" width="2.600" height="1.400" rx=".400"/><rect x="5" y=".200" width="9.700" height="1.400" rx=".400"/><rect x="5" y="3.800" width="9.700" height="1.400" rx=".400"/><rect x="5" y="7.400" width="3" height="1.400" rx=".400"/><rect x="5" y="11" width="3" height="1.400" rx=".400"/><circle cx="11.400" cy="10.600" r="5.300"/></g><path d="M11.400 7.900v5.400M8.700 10.600h5.400" stroke="#fff" stroke-width="1.200"/></svg></span>
<span class="t" style="left:259.7px;top:227px;font-size:16.3px;letter-spacing:0.41px;transform:scaleX(1.06);-webkit-text-stroke:0.6px #343741;">33 columns hidden</span>
<span class="i" style="left:437.3px;top:230.6px"><svg width="12" height="14" viewBox="0 0 12 14" fill="none" ><path d="M6 1.200v11.600M1 5.600L6 .900l5 4.700M1 8.400l5 4.700 5-4.700" stroke="#343741" stroke-width="1.15" stroke-linecap="round" stroke-linejoin="round"/></svg></span>
<span class="t" style="left:462.3px;top:227px;font-size:16.3px;letter-spacing:0.37px;transform:scaleX(1.06);-webkit-text-stroke:0.6px #343741;">1 fields sorted</span>
<span class="i" style="left:598.9px;top:231.3px"><svg width="19.4" height="13.2" viewBox="0 0 19.4 13.2" fill="none" ><g fill="#2b2d36"><rect x="0" y="0" width="5.800" height="3.700" rx=".700"/><rect x="6.800" y="0" width="5.800" height="3.700" rx=".700"/><rect x="13.600" y="0" width="5.800" height="3.700" rx=".700"/><rect x="0" y="4.700" width="5.800" height="3.700" rx=".700"/><rect x="6.800" y="4.700" width="5.800" height="3.700" rx=".700"/><rect x="13.600" y="4.700" width="5.800" height="3.700" rx=".700"/><rect x="0" y="9.500" width="5.800" height="3.700" rx=".700"/><rect x="6.800" y="9.500" width="5.800" height="3.700" rx=".700"/><rect x="13.600" y="9.500" width="5.800" height="3.700" rx=".700"/></g><rect x="8" y="10.600" width="3.400" height="1.500" fill="#dfe3ea"/><rect x="14.800" y="10.600" width="3.400" height="1.500" fill="#dfe3ea"/></svg></span>
<span class="t" style="left:626.9px;top:227px;font-size:16.3px;letter-spacing:0.22px;transform:scaleX(1.06);-webkit-text-stroke:0.6px #343741;">1 heat fields</span>
<span class="i" style="left:746.3px;top:227.5px"><svg width="18" height="20" viewBox="0 0 18 20" fill="none" ><g fill="#26272e"><rect x="1" y="1" width="4" height="6" rx=".6"/><rect x="7" y="1" width="4" height="6" rx=".6"/><rect x="13" y="1" width="4" height="6" rx=".6"/></g><path d="M0 10h18" stroke="#343741" stroke-width="1.2" stroke-linecap="round" stroke-linejoin="round"/><rect x="1.500" y="13.500" width="3" height="5" stroke="#343741" stroke-width="1" stroke-linecap="round" stroke-linejoin="round"/><rect x="7.500" y="13.500" width="3" height="5" stroke="#343741" stroke-width="1" stroke-linecap="round" stroke-linejoin="round"/><rect x="13.500" y="13.500" width="3" height="5" stroke="#343741" stroke-width="1" stroke-linecap="round" stroke-linejoin="round"/></svg></span>
<span class="t" style="left:774.64px;top:227px;font-size:16.3px;letter-spacing:-0.15px;transform:scaleX(1.0491);">Compare</span>
<span class="i" style="left:1524.5px;top:228.9px"><svg width="18" height="16" viewBox="0 0 18 16" fill="none" ><path d="M1.500 15V7.500a3 3 0 0 1 3-3H16M12.500 1L16 4.500 12.500 8" stroke="#343741" stroke-width="1.2" stroke-linecap="round" stroke-linejoin="round"/></svg></span>
<span class="t" style="left:1553.46px;top:227px;font-size:16.3px;letter-spacing:-0.15px;transform:scaleX(1.0447);">Transpose</span>
<span class="i" style="left:1662.2px;top:228px"><svg width="18.6" height="18.6" viewBox="0 0 20 20" fill="none" ><rect x="1" y="1.500" width="18" height="17" rx="2" stroke="#343741" stroke-width="1.2" stroke-linecap="round" stroke-linejoin="round"/><path d="M1 5.500h18" stroke="#343741" stroke-width="1.2" stroke-linecap="round" stroke-linejoin="round"/><path d="M4 8.500h3M8.500 8.500h3M13 8.500h3M4 11.500h3M8.500 11.500h3M13 11.500h3M4 14.500h3M8.500 14.500h3M13 14.500h3" stroke="#343741" stroke-width="1.2" stroke-linecap="round" stroke-linejoin="round"/></svg></span>
<span class="t" style="left:1690.04px;top:227px;font-size:16.3px;letter-spacing:-0.15px;transform:scaleX(1.0456);">Display</span>
<span class="i" style="left:1776.5px;top:228px"><svg width="18.6" height="18.6" viewBox="0 0 20 20" fill="none" ><rect x="1" y="1" width="18" height="18" rx="2.500" stroke="#343741" stroke-width="1.25" stroke-linecap="round" stroke-linejoin="round"/><path d="M5.300 9v-3.700H9M11 5.300h3.700V9M14.700 11v3.700H11M9 14.700H5.300V11" stroke="#343741" stroke-width="1.25" stroke-linecap="round" stroke-linejoin="round"/></svg></span>
<span class="t" style="left:1804.62px;top:227px;font-size:16.3px;letter-spacing:-0.13px;transform:scaleX(1.06);">Full screen</span>
<div class="bx" style="left:1328px;top:297px;width:191px;height:45px;background:#fcdfd8"></div>
<div class="bx alt" style="left:220.8px;top:342px;width:1681.7px;height:46px;"></div>
<div class="bx" style="left:1328px;top:342px;width:191px;height:46px;background:#f9cec5"></div>
<div class="bx" style="left:1328px;top:388px;width:191px;height:45px;background:#f6bfb5"></div>
<div class="bx alt" style="left:220.8px;top:433px;width:1681.7px;height:46px;"></div>
<div class="bx" style="left:1328px;top:433px;width:191px;height:46px;background:#f2b0a5"></div>
<div class="bx" style="left:1328px;top:479px;width:191px;height:45px;background:#eda194"></div>
<div class="bx alt" style="left:220.8px;top:524px;width:1681.7px;height:46px;"></div>
<div class="bx" style="left:1328px;top:524px;width:191px;height:46px;background:#e89182"></div>
<div class="bx" style="left:1328px;top:570px;width:191px;height:45px;background:#e28272"></div>
<div class="bx alt" style="left:220.8px;top:615px;width:1681.7px;height:46px;"></div>
<div class="bx" style="left:1328px;top:615px;width:191px;height:46px;background:#dc7261"></div>
<div class="bx" style="left:1328px;top:661px;width:191px;height:45px;background:#d5614e"></div>
<div class="bx alt" style="left:220.8px;top:706px;width:1681.7px;height:46px;"></div>
<div class="bx" style="left:1328px;top:706px;width:191px;height:46px;background:#cd503c"></div>
<svg class="grid" width="1920" height="1059" viewBox="0 0 1920 1059"><rect x="558.55" y="257.5" width="1.3" height="39" fill="#d3dae6" opacity="1"/><rect x="558.7" y="297" width="1" height="454" fill="#d3dae6" opacity="0.45"/><rect x="750.55" y="257.5" width="1.3" height="39" fill="#d3dae6" opacity="1"/><rect x="750.7" y="297" width="1" height="454" fill="#d3dae6" opacity="0.45"/><rect x="942.55" y="257.5" width="1.3" height="39" fill="#d3dae6" opacity="1"/><rect x="942.7" y="297" width="1" height="454" fill="#d3dae6" opacity="0.45"/><rect x="1134.55" y="257.5" width="1.3" height="39" fill="#d3dae6" opacity="1"/><rect x="1134.7" y="297" width="1" height="454" fill="#d3dae6" opacity="0.45"/><rect x="1326.75" y="257.5" width="1.3" height="39" fill="#d3dae6" opacity="1"/><rect x="1326.9" y="297" width="1" height="454" fill="#d3dae6" opacity="0.45"/><rect x="1518.75" y="257.5" width="1.3" height="39" fill="#d3dae6" opacity="1"/><rect x="1518.9" y="297" width="1" height="454" fill="#d3dae6" opacity="0.45"/><rect x="1710.75" y="257.5" width="1.3" height="39" fill="#d3dae6" opacity="1"/><rect x="1710.9" y="297" width="1" height="454" fill="#d3dae6" opacity="0.45"/><rect x="219.3" y="217.25" width="1684.7" height="1.5" fill="#d3dae6" opacity="1"/><rect x="219.3" y="750.65" width="1684.7" height="1.5" fill="#d3dae6" opacity="1"/><rect x="219.35" y="217.3" width="1.5" height="534.8" fill="#d3dae6" opacity="1"/><rect x="1902.45" y="217.3" width="1.5" height="534.8" fill="#d3dae6" opacity="1"/><rect x="220" y="256.1" width="1683" height="1.6" fill="#d3dae6" opacity="1"/><rect x="220" y="295.9" width="1683" height="1.4" fill="#d3dae6" opacity="1"/><rect x="220" y="341.39" width="1683" height="1.4" fill="#d3dae6" opacity="1"/><rect x="220" y="386.88" width="1683" height="1.4" fill="#d3dae6" opacity="1"/><rect x="220" y="432.37" width="1683" height="1.4" fill="#d3dae6" opacity="1"/><rect x="220" y="477.86" width="1683" height="1.4" fill="#d3dae6" opacity="1"/><rect x="220" y="523.35" width="1683" height="1.4" fill="#d3dae6" opacity="1"/><rect x="220" y="568.84" width="1683" height="1.4" fill="#d3dae6" opacity="1"/><rect x="220" y="614.33" width="1683" height="1.4" fill="#d3dae6" opacity="1"/><rect x="220" y="659.82" width="1683" height="1.4" fill="#d3dae6" opacity="1"/><rect x="220" y="705.31" width="1683" height="1.4" fill="#d3dae6" opacity="1"/></svg>
<div class="bx cb" style="left:290px;top:267.4px;width:18px;height:18px;"></div>
<span class="t" style="left:590.89px;top:267px;font-size:16.3px;letter-spacing:0.18px;transform:scaleX(1.06);font-weight:bold;color:#2b2e36;">wait_time</span>
<span class="i" style="left:567px;top:271.9px"><svg width="20" height="10" viewBox="0 0 20 10" fill="none" ><circle cx="3.500" cy="5" r="2.300" stroke="#343741" stroke-width="1.4" stroke-linecap="round" stroke-linejoin="round"/><circle cx="16.500" cy="5" r="2.300" stroke="#343741" stroke-width="1.4" stroke-linecap="round" stroke-linejoin="round"/><path d="M6 5h8" stroke="#343741" stroke-width="1.6" stroke-linecap="round" stroke-linejoin="round"/></svg></span>
<span class="i" style="left:730.9px;top:271.3px"><svg width="12" height="12" viewBox="0 0 12 12" fill="none" ><path d="M1.500 4l4.500 4.500L10.500 4" stroke="#343741" stroke-width="1.1" stroke-linecap="round" stroke-linejoin="round"/></svg></span>
<span class="t" style="left:782.21px;top:267px;font-size:16.3px;letter-spacing:0.07px;transform:scaleX(1.06);font-weight:bold;color:#2b2e36;">duration</span>
<span class="i" style="left:759px;top:271.9px"><svg width="20" height="10" viewBox="0 0 20 10" fill="none" ><circle cx="3.500" cy="5" r="2.300" stroke="#343741" stroke-width="1.4" stroke-linecap="round" stroke-linejoin="round"/><circle cx="16.500" cy="5" r="2.300" stroke="#343741" stroke-width="1.4" stroke-linecap="round" stroke-linejoin="round"/><path d="M6 5h8" stroke="#343741" stroke-width="1.6" stroke-linecap="round" stroke-linejoin="round"/></svg></span>
<span class="i" style="left:922.9px;top:271.3px"><svg width="12" height="12" viewBox="0 0 12 12" fill="none" ><path d="M1.500 4l4.500 4.500L10.500 4" stroke="#343741" stroke-width="1.1" stroke-linecap="round" stroke-linejoin="round"/></svg></span>
<span class="t" style="left:951.1px;top:267px;font-size:16.3px;transform:scaleX(1.06);font-weight:bold;color:#2b2e36;">out.loss</span>
<span class="i" style="left:1114.9px;top:271.3px"><svg width="12" height="12" viewBox="0 0 12 12" fill="none" ><path d="M1.500 4l4.500 4.500L10.500 4" stroke="#343741" stroke-width="1.1" stroke-linecap="round" stroke-linejoin="round"/></svg></span>
<span class="t" style="left:1143.1px;top:267px;font-size:16.3px;letter-spacing:0.06px;transform:scaleX(1.06);font-weight:bold;color:#2b2e36;">out.accuracy</span>
<span class="i" style="left:1307.1px;top:271.3px"><svg width="12" height="12" viewBox="0 0 12 12" fill="none" ><path d="M1.500 4l4.500 4.500L10.500 4" stroke="#343741" stroke-width="1.1" stroke-linecap="round" stroke-linejoin="round"/></svg></span>
<span class="t" style="left:1358.4px;top:267px;font-size:16.3px;letter-spacing:-0.08px;transform:scaleX(1.06);font-weight:bold;color:#2b2e36;">out.val_loss</span>
<span class="i" style="left:1337.05px;top:270.05px"><svg width="13.5" height="12.5" viewBox="0 0 13.5 12.5" fill="none" ><path d="M6.750 11.800V1.200M1 6.600L6.750 .900 12.500 6.600" stroke="#343741" stroke-width="1.2" stroke-linecap="round" stroke-linejoin="round"/></svg></span>
<span class="i" style="left:1499.1px;top:271.3px"><svg width="12" height="12" viewBox="0 0 12 12" fill="none" ><path d="M1.500 4l4.500 4.500L10.500 4" stroke="#343741" stroke-width="1.1" stroke-linecap="round" stroke-linejoin="round"/></svg></span>
<span class="t" style="left:1527.1px;top:267px;font-size:16.3px;letter-spacing:-0.02px;transform:scaleX(1.06);font-weight:bold;color:#2b2e36;">out.val_accuracy</span>
<span class="i" style="left:1691.1px;top:271.3px"><svg width="12" height="12" viewBox="0 0 12 12" fill="none" ><path d="M1.500 4l4.500 4.500L10.500 4" stroke="#343741" stroke-width="1.1" stroke-linecap="round" stroke-linejoin="round"/></svg></span>
<span class="t" style="left:1718.8px;top:267px;font-size:16.3px;letter-spacing:0.11px;transform:scaleX(1.06);font-weight:bold;color:#2b2e36;">out.best_val_loss</span>
<span class="i" style="left:1883.2px;top:271.3px"><svg width="12" height="12" viewBox="0 0 12 12" fill="none" ><path d="M1.500 4l4.500 4.500L10.500 4" stroke="#343741" stroke-width="1.1" stroke-linecap="round" stroke-linejoin="round"/></svg></span>
<span class="t" style="left:227.85px;top:310px;font-size:14.3px;letter-spacing:-0.15px;transform:scaleX(1.0512);color:#535966;">21</span>
<span class="i" style="left:263.6px;top:312.8px"><svg width="5" height="14" viewBox="0 0 5 14" fill="none" ><rect x=".900" y=".600" width="3.200" height="3.200" rx=".350" stroke="#343741" stroke-width="1" stroke-linecap="round" stroke-linejoin="round"/><rect x=".900" y="5.400" width="3.200" height="3.200" rx=".350" stroke="#343741" stroke-width="1" stroke-linecap="round" stroke-linejoin="round"/><rect x=".900" y="10.200" width="3.200" height="3.200" rx=".350" stroke="#343741" stroke-width="1" stroke-linecap="round" stroke-linejoin="round"/></svg></span>
<div class="bx cb" style="left:289.8px;top:310.9px;width:17.9px;height:17.6px;"></div>
<span class="i" style="left:322px;top:314.1px"><svg width="16" height="12" viewBox="0 0 16 12" fill="none" ><path d="M1.200 6.500l4.300 4.300L14.800 1.200" stroke="#1c8c80" stroke-width="1.15" stroke-linecap="round" stroke-linejoin="round"/></svg></span>
<span class="t" style="left:348.87px;top:310px;font-size:16.5px;letter-spacing:0.04px;transform:scaleX(1.1);color:#535966;">8637d621b</span>
<span class="i" style="left:453.5px;top:311.4px"><svg width="16" height="16" viewBox="0 0 16 16" fill="none" ><path d="M13.200 9.500v4a1.500 1.500 0 0 1-1.500 1.500" stroke="#0b72c4" stroke-width="1.2" stroke-linecap="round" stroke-linejoin="round"/><path d="M11.700 15H2.500" stroke="#3f9fb0" stroke-width="1.3" stroke-linecap="round" stroke-linejoin="round"/><path d="M2.500 15A1.500 1.500 0 0 1 1 13.500v-9A1.500 1.500 0 0 1 2.500 3H6.500" stroke="#0b72c4" stroke-width="1.2" stroke-linecap="round" stroke-linejoin="round"/><path d="M10 1h5v5M15 1L7.200 8.800" stroke="#0b72c4" stroke-width="1.2" stroke-linecap="round" stroke-linejoin="round"/></svg></span>
<span class="i" style="left:481.9px;top:313.25px"><svg width="15" height="13.5" viewBox="0 0 15 13.5" fill="none" ><path d="M.600 3.900H8M4.900 .700L8.300 3.900 4.900 7.100M14.400 9.700H7M10.100 6.500L6.700 9.700l3.400 3.200" stroke="#1c8c80" stroke-width="1.25" stroke-linecap="round" stroke-linejoin="round"/></svg></span>
<span class="i" style="left:509.3px;top:312px"><svg width="16" height="16" viewBox="0 0 16 16" fill="none" ><path d="M8 1.500l1.950 4.300 4.650.500-3.450 3.200.950 4.600L8 11.800l-4.100 2.300.950-4.600L1.400 6.300l4.650-.500z" stroke="#343741" stroke-width="1.15" stroke-linecap="round" stroke-linejoin="round"/></svg></span>
<span class="i" style="left:539.4px;top:311.6px"><svg width="12" height="16" viewBox="0 0 12 16" fill="none" ><path d="M3.500 1h5M4 1v5.500L2 9h8L8 6.500V1M6 9v6" stroke="#343741" stroke-width="1.1" stroke-linecap="round" stroke-linejoin="round"/></svg></span>
<span class="t" style="left:725.1px;top:310px;font-size:16.5px;letter-spacing:-0.15px;transform:scaleX(1.0908);">7s</span>
<span class="i" style="left:703.9px;top:314.5px"><svg width="14" height="13" viewBox="0 0 14 13" fill="none" ><path d="M7 .800v11M1 6l6 5.900L13 6" stroke="#d14b34" stroke-width="1.2" stroke-linecap="round" stroke-linejoin="round"/></svg></span>
<span class="t" style="left:868.2px;top:310px;font-size:16.5px;letter-spacing:-0.15px;transform:scaleX(1.0857);">22m 39s</span>
<span class="i" style="left:847px;top:314.1px"><svg width="14" height="13" viewBox="0 0 14 13" fill="none" ><path d="M7 12.200V1.200M1 7l6-5.900L13 7" stroke="#1c8c80" stroke-width="1.2" stroke-linecap="round" stroke-linejoin="round"/></svg></span>
<span class="i" style="left:953px;top:314.5px"><svg width="14" height="13" viewBox="0 0 14 13" fill="none" ><path d="M7 .800v11M1 6l6 5.900L13 6" stroke="#d14b34" stroke-width="1.2" stroke-linecap="round" stroke-linejoin="round"/></svg></span>
<span class="t" style="left:974.26px;top:310px;font-size:16.5px;transform:scaleX(1.1);color:#343741;">0.134642422199...</span>
<span class="i" style="left:1145px;top:314.1px"><svg width="14" height="13" viewBox="0 0 14 13" fill="none" ><path d="M7 12.200V1.200M1 7l6-5.900L13 7" stroke="#1c8c80" stroke-width="1.2" stroke-linecap="round" stroke-linejoin="round"/></svg></span>
<span class="t" style="left:1166.26px;top:310px;font-size:16.5px;transform:scaleX(1.1);color:#343741;">0.948949992656...</span>
<span class="i" style="left:1337.2px;top:314.5px"><svg width="14" height="13" viewBox="0 0 14 13" fill="none" ><path d="M7 .800v11M1 6l6 5.900L13 6" stroke="#d14b34" stroke-width="1.2" stroke-linecap="round" stroke-linejoin="round"/></svg></span>
<span class="t" style="left:1358.46px;top:310px;font-size:16.5px;transform:scaleX(1.1);color:#000;-webkit-text-stroke:0.15px #000;">0.286912977695...</span>
<span class="i" style="left:1529.2px;top:314.1px"><svg width="14" height="13" viewBox="0 0 14 13" fill="none" ><path d="M7 12.200V1.200M1 7l6-5.900L13 7" stroke="#1c8c80" stroke-width="1.2" stroke-linecap="round" stroke-linejoin="round"/></svg></span>
<span class="t" style="left:1550.46px;top:310px;font-size:16.5px;transform:scaleX(1.1);color:#343741;">0.915499985218...</span>
<span class="i" style="left:1721.2px;top:314.5px"><svg width="14" height="13" viewBox="0 0 14 13" fill="none" ><path d="M7 .800v11M1 6l6 5.900L13 6" stroke="#d14b34" stroke-width="1.2" stroke-linecap="round" stroke-linejoin="round"/></svg></span>
<span class="t" style="left:1742.46px;top:310px;font-size:16.5px;transform:scaleX(1.1);color:#343741;">0.251517802476...</span>
<span class="t" style="left:227.81px;top:356px;font-size:14.3px;letter-spacing:0.21px;transform:scaleX(1.1);color:#535966;">22</span>
<span class="i" style="left:263.6px;top:358.29px"><svg width="5" height="14" viewBox="0 0 5 14" fill="none" ><rect x=".900" y=".600" width="3.200" height="3.200" rx=".350" stroke="#343741" stroke-width="1" stroke-linecap="round" stroke-linejoin="round"/><rect x=".900" y="5.400" width="3.200" height="3.200" rx=".350" stroke="#343741" stroke-width="1" stroke-linecap="round" stroke-linejoin="round"/><rect x=".900" y="10.200" width="3.200" height="3.200" rx=".350" stroke="#343741" stroke-width="1" stroke-linecap="round" stroke-linejoin="round"/></svg></span>
<div class="bx cb" style="left:289.8px;top:356.39px;width:17.9px;height:17.6px;"></div>
<span class="i" style="left:322px;top:359.59px"><svg width="16" height="12" viewBox="0 0 16 12" fill="none" ><path d="M1.200 6.500l4.300 4.300L14.800 1.200" stroke="#1c8c80" stroke-width="1.15" stroke-linecap="round" stroke-linejoin="round"/></svg></span>
<span class="t" style="left:348.87px;top:355px;font-size:16.5px;letter-spacing:-0.08px;transform:scaleX(1.1);color:#535966;">ab3c25193</span>
<span class="i" style="left:453.5px;top:356.89px"><svg width="16" height="16" viewBox="0 0 16 16" fill="none" ><path d="M13.200 9.500v4a1.500 1.500 0 0 1-1.500 1.500" stroke="#0b72c4" stroke-width="1.2" stroke-linecap="round" stroke-linejoin="round"/><path d="M11.700 15H2.500" stroke="#3f9fb0" stroke-width="1.3" stroke-linecap="round" stroke-linejoin="round"/><path d="M2.500 15A1.500 1.500 0 0 1 1 13.500v-9A1.500 1.500 0 0 1 2.500 3H6.500" stroke="#0b72c4" stroke-width="1.2" stroke-linecap="round" stroke-linejoin="round"/><path d="M10 1h5v5M15 1L7.200 8.800" stroke="#0b72c4" stroke-width="1.2" stroke-linecap="round" stroke-linejoin="round"/></svg></span>
<span class="i" style="left:481.9px;top:358.74px"><svg width="15" height="13.5" viewBox="0 0 15 13.5" fill="none" ><path d="M.600 3.900H8M4.900 .700L8.300 3.900 4.900 7.100M14.400 9.700H7M10.100 6.500L6.700 9.700l3.400 3.200" stroke="#1c8c80" stroke-width="1.25" stroke-linecap="round" stroke-linejoin="round"/></svg></span>
<span class="i" style="left:509.3px;top:357.49px"><svg width="16" height="16" viewBox="0 0 16 16" fill="none" ><path d="M8 1.500l1.950 4.300 4.650.500-3.450 3.200.950 4.600L8 11.800l-4.100 2.300.950-4.600L1.400 6.300l4.650-.500z" stroke="#343741" stroke-width="1.15" stroke-linecap="round" stroke-linejoin="round"/></svg></span>
<span class="i" style="left:539.4px;top:357.09px"><svg width="12" height="16" viewBox="0 0 12 16" fill="none" ><path d="M3.500 1h5M4 1v5.500L2 9h8L8 6.500V1M6 9v6" stroke="#343741" stroke-width="1.1" stroke-linecap="round" stroke-linejoin="round"/></svg></span>
<span class="t" style="left:715.35px;top:355px;font-size:16.5px;letter-spacing:-0.15px;transform:scaleX(1.0881);">14s</span>
<span class="i" style="left:694.6px;top:359.99px"><svg width="14" height="13" viewBox="0 0 14 13" fill="none" ><path d="M7 .800v11M1 6l6 5.900L13 6" stroke="#d14b34" stroke-width="1.2" stroke-linecap="round" stroke-linejoin="round"/></svg></span>
<span class="t" style="left:868.21px;top:355px;font-size:16.5px;letter-spacing:-0.15px;transform:scaleX(1.0856);">17m 10s</span>
<span class="i" style="left:847.45px;top:359.59px"><svg width="14" height="13" viewBox="0 0 14 13" fill="none" ><path d="M7 12.200V1.200M1 7l6-5.900L13 7" stroke="#1c8c80" stroke-width="1.2" stroke-linecap="round" stroke-linejoin="round"/></svg></span>
<span class="i" style="left:953px;top:359.99px"><svg width="14" height="13" viewBox="0 0 14 13" fill="none" ><path d="M7 .800v11M1 6l6 5.900L13 6" stroke="#d14b34" stroke-width="1.2" stroke-linecap="round" stroke-linejoin="round"/></svg></span>
<span class="t" style="left:974.26px;top:355px;font-size:16.5px;transform:scaleX(1.1);color:#343741;">0.139094948768...</span>
<span class="i" style="left:1145px;top:359.59px"><svg width="14" height="13" viewBox="0 0 14 13" fill="none" ><path d="M7 12.200V1.200M1 7l6-5.900L13 7" stroke="#1c8c80" stroke-width="1.2" stroke-linecap="round" stroke-linejoin="round"/></svg></span>
<span class="t" style="left:1166.26px;top:355px;font-size:16.5px;transform:scaleX(1.1);color:#343741;">0.947066664695...</span>
<span class="i" style="left:1337.2px;top:359.99px"><svg width="14" height="13" viewBox="0 0 14 13" fill="none" ><path d="M7 .800v11M1 6l6 5.900L13 6" stroke="#d14b34" stroke-width="1.2" stroke-linecap="round" stroke-linejoin="round"/></svg></span>
<span class="t" style="left:1358.46px;top:355px;font-size:16.5px;transform:scaleX(1.1);color:#000;-webkit-text-stroke:0.15px #000;">0.291301697492...</span>
<span class="i" style="left:1529.2px;top:359.59px"><svg width="14" height="13" viewBox="0 0 14 13" fill="none" ><path d="M7 12.200V1.200M1 7l6-5.900L13 7" stroke="#1c8c80" stroke-width="1.2" stroke-linecap="round" stroke-linejoin="round"/></svg></span>
<span class="t" style="left:1550.46px;top:355px;font-size:16.5px;transform:scaleX(1.1);color:#343741;">0.910600006580...</span>
<span class="i" style="left:1721.2px;top:359.99px"><svg width="14" height="13" viewBox="0 0 14 13" fill="none" ><path d="M7 .800v11M1 6l6 5.900L13 6" stroke="#d14b34" stroke-width="1.2" stroke-linecap="round" stroke-linejoin="round"/></svg></span>
<span class="t" style="left:1742.46px;top:355px;font-size:16.5px;transform:scaleX(1.1);color:#343741;">0.249436840415...</span>
<span class="t" style="left:227.81px;top:401px;font-size:14.3px;letter-spacing:0.14px;transform:scaleX(1.1);color:#535966;">23</span>
<span class="i" style="left:263.6px;top:403.78px"><svg width="5" height="14" viewBox="0 0 5 14" fill="none" ><rect x=".900" y=".600" width="3.200" height="3.200" rx=".350" stroke="#343741" stroke-width="1" stroke-linecap="round" stroke-linejoin="round"/><rect x=".900" y="5.400" width="3.200" height="3.200" rx=".350" stroke="#343741" stroke-width="1" stroke-linecap="round" stroke-linejoin="round"/><rect x=".900" y="10.200" width="3.200" height="3.200" rx=".350" stroke="#343741" stroke-width="1" stroke-linecap="round" stroke-linejoin="round"/></svg></span>
<div class="bx cb" style="left:289.8px;top:401.88px;width:17.9px;height:17.6px;"></div>
<span class="i" style="left:322px;top:405.08px"><svg width="16" height="12" viewBox="0 0 16 12" fill="none" ><path d="M1.200 6.500l4.300 4.300L14.800 1.200" stroke="#1c8c80" stroke-width="1.15" stroke-linecap="round" stroke-linejoin="round"/></svg></span>
<span class="t" style="left:348.97px;top:401px;font-size:16.5px;letter-spacing:-0.15px;transform:scaleX(1.0989);color:#535966;">0e2107f32</span>
<span class="i" style="left:453.5px;top:402.38px"><svg width="16" height="16" viewBox="0 0 16 16" fill="none" ><path d="M13.200 9.500v4a1.500 1.500 0 0 1-1.500 1.500" stroke="#0b72c4" stroke-width="1.2" stroke-linecap="round" stroke-linejoin="round"/><path d="M11.700 15H2.500" stroke="#3f9fb0" stroke-width="1.3" stroke-linecap="round" stroke-linejoin="round"/><path d="M2.500 15A1.500 1.500 0 0 1 1 13.500v-9A1.500 1.500 0 0 1 2.500 3H6.500" stroke="#0b72c4" stroke-width="1.2" stroke-linecap="round" stroke-linejoin="round"/><path d="M10 1h5v5M15 1L7.200 8.800" stroke="#0b72c4" stroke-width="1.2" stroke-linecap="round" stroke-linejoin="round"/></svg></span>
<span class="i" style="left:481.9px;top:404.23px"><svg width="15" height="13.5" viewBox="0 0 15 13.5" fill="none" ><path d="M.600 3.900H8M4.900 .700L8.300 3.900 4.900 7.100M14.400 9.700H7M10.100 6.500L6.700 9.700l3.400 3.200" stroke="#1c8c80" stroke-width="1.25" stroke-linecap="round" stroke-linejoin="round"/></svg></span>
<span class="i" style="left:509.3px;top:402.98px"><svg width="16" height="16" viewBox="0 0 16 16" fill="none" ><path d="M8 1.500l1.950 4.300 4.650.500-3.450 3.200.950 4.600L8 11.800l-4.100 2.300.950-4.600L1.400 6.300l4.650-.500z" stroke="#343741" stroke-width="1.15" stroke-linecap="round" stroke-linejoin="round"/></svg></span>
<span class="i" style="left:539.4px;top:402.58px"><svg width="12" height="16" viewBox="0 0 12 16" fill="none" ><path d="M3.500 1h5M4 1v5.500L2 9h8L8 6.500V1M6 9v6" stroke="#343741" stroke-width="1.1" stroke-linecap="round" stroke-linejoin="round"/></svg></span>
<span class="t" style="left:715.35px;top:401px;font-size:16.5px;letter-spacing:-0.15px;transform:scaleX(1.0881);">10s</span>
<span class="i" style="left:694.6px;top:405.48px"><svg width="14" height="13" viewBox="0 0 14 13" fill="none" ><path d="M7 .800v11M1 6l6 5.900L13 6" stroke="#d14b34" stroke-width="1.2" stroke-linecap="round" stroke-linejoin="round"/></svg></span>
<span class="t" style="left:869.57px;top:401px;font-size:16.5px;letter-spacing:-0.15px;transform:scaleX(1.0853);">17m 11s</span>
<span class="i" style="left:848.82px;top:405.08px"><svg width="14" height="13" viewBox="0 0 14 13" fill="none" ><path d="M7 12.200V1.200M1 7l6-5.900L13 7" stroke="#1c8c80" stroke-width="1.2" stroke-linecap="round" stroke-linejoin="round"/></svg></span>
<span class="i" style="left:953px;top:405.48px"><svg width="14" height="13" viewBox="0 0 14 13" fill="none" ><path d="M7 .800v11M1 6l6 5.900L13 6" stroke="#d14b34" stroke-width="1.2" stroke-linecap="round" stroke-linejoin="round"/></svg></span>
<span class="t" style="left:974.26px;top:401px;font-size:16.5px;transform:scaleX(1.1);color:#343741;">0.140073135495...</span>
<span class="i" style="left:1145px;top:405.08px"><svg width="14" height="13" viewBox="0 0 14 13" fill="none" ><path d="M7 12.200V1.200M1 7l6-5.900L13 7" stroke="#1c8c80" stroke-width="1.2" stroke-linecap="round" stroke-linejoin="round"/></svg></span>
<span class="t" style="left:1166.26px;top:401px;font-size:16.5px;transform:scaleX(1.1);color:#343741;">0.946816682815...</span>
<span class="i" style="left:1337.2px;top:405.48px"><svg width="14" height="13" viewBox="0 0 14 13" fill="none" ><path d="M7 .800v11M1 6l6 5.900L13 6" stroke="#d14b34" stroke-width="1.2" stroke-linecap="round" stroke-linejoin="round"/></svg></span>
<span class="t" style="left:1358.46px;top:401px;font-size:16.5px;transform:scaleX(1.1);color:#000;-webkit-text-stroke:0.15px #000;">0.297043710947...</span>
<span class="i" style="left:1529.2px;top:405.08px"><svg width="14" height="13" viewBox="0 0 14 13" fill="none" ><path d="M7 12.200V1.200M1 7l6-5.900L13 7" stroke="#1c8c80" stroke-width="1.2" stroke-linecap="round" stroke-linejoin="round"/></svg></span>
<span class="t" style="left:1550.46px;top:401px;font-size:16.5px;letter-spacing:0.23px;transform:scaleX(1.1);color:#343741;">0.911499977111...</span>
<span class="i" style="left:1721.2px;top:405.48px"><svg width="14" height="13" viewBox="0 0 14 13" fill="none" ><path d="M7 .800v11M1 6l6 5.900L13 6" stroke="#d14b34" stroke-width="1.2" stroke-linecap="round" stroke-linejoin="round"/></svg></span>
<span class="t" style="left:1742.46px;top:401px;font-size:16.5px;transform:scaleX(1.1);color:#343741;">0.246266305446...</span>
<span class="t" style="left:227.81px;top:447px;font-size:14.3px;letter-spacing:-0.07px;transform:scaleX(1.1);color:#535966;">24</span>
<span class="i" style="left:263.6px;top:449.27px"><svg width="5" height="14" viewBox="0 0 5 14" fill="none" ><rect x=".900" y=".600" width="3.200" height="3.200" rx=".350" stroke="#343741" stroke-width="1" stroke-linecap="round" stroke-linejoin="round"/><rect x=".900" y="5.400" width="3.200" height="3.200" rx=".350" stroke="#343741" stroke-width="1" stroke-linecap="round" stroke-linejoin="round"/><rect x=".900" y="10.200" width="3.200" height="3.200" rx=".350" stroke="#343741" stroke-width="1" stroke-linecap="round" stroke-linejoin="round"/></svg></span>
<div class="bx cb" style="left:289.8px;top:447.37px;width:17.9px;height:17.6px;"></div>
<span class="i" style="left:322px;top:450.57px"><svg width="16" height="12" viewBox="0 0 16 12" fill="none" ><path d="M1.200 6.500l4.300 4.300L14.800 1.200" stroke="#1c8c80" stroke-width="1.15" stroke-linecap="round" stroke-linejoin="round"/></svg></span>
<span class="t" style="left:348.69px;top:446px;font-size:16.5px;letter-spacing:-0.08px;transform:scaleX(1.1);color:#535966;">75b9acc83</span>
<span class="i" style="left:453.5px;top:447.87px"><svg width="16" height="16" viewBox="0 0 16 16" fill="none" ><path d="M13.200 9.500v4a1.500 1.500 0 0 1-1.500 1.500" stroke="#0b72c4" stroke-width="1.2" stroke-linecap="round" stroke-linejoin="round"/><path d="M11.700 15H2.500" stroke="#3f9fb0" stroke-width="1.3" stroke-linecap="round" stroke-linejoin="round"/><path d="M2.500 15A1.500 1.500 0 0 1 1 13.500v-9A1.500 1.500 0 0 1 2.500 3H6.500" stroke="#0b72c4" stroke-width="1.2" stroke-linecap="round" stroke-linejoin="round"/><path d="M10 1h5v5M15 1L7.200 8.800" stroke="#0b72c4" stroke-width="1.2" stroke-linecap="round" stroke-linejoin="round"/></svg></span>
<span class="i" style="left:481.9px;top:449.72px"><svg width="15" height="13.5" viewBox="0 0 15 13.5" fill="none" ><path d="M.600 3.900H8M4.900 .700L8.300 3.900 4.900 7.100M14.400 9.700H7M10.100 6.500L6.700 9.700l3.400 3.200" stroke="#1c8c80" stroke-width="1.25" stroke-linecap="round" stroke-linejoin="round"/></svg></span>
<span class="i" style="left:509.3px;top:448.47px"><svg width="16" height="16" viewBox="0 0 16 16" fill="none" ><path d="M8 1.500l1.950 4.300 4.650.500-3.450 3.200.950 4.600L8 11.800l-4.100 2.300.950-4.600L1.400 6.300l4.650-.500z" stroke="#343741" stroke-width="1.15" stroke-linecap="round" stroke-linejoin="round"/></svg></span>
<span class="i" style="left:537.4px;top:448.27px"><svg width="16" height="16" viewBox="0 0 16 16" fill="none" ><path d="M9.500 1l5.500 5.500-1.500.5-2.500 2.500.5 3.500-1.500 1.500L6 10.500 1.500 15 1 14.500 5.500 10 2 6.500 3.500 5l3.500.5L9.500 3z" fill="#d14b34"/></svg></span>
<span class="t" style="left:676.21px;top:446px;font-size:16.5px;letter-spacing:-0.15px;transform:scaleX(1.0856);">14m 23s</span>
<span class="t" style="left:877.97px;top:446px;font-size:16.5px;letter-spacing:-0.15px;transform:scaleX(1.0859);">15m 1s</span>
<span class="t" style="left:951.06px;top:446px;font-size:16.5px;letter-spacing:0.03px;transform:scaleX(1.1);color:#343741;">0.28658303618431...</span>
<span class="t" style="left:1143.06px;top:446px;font-size:16.5px;letter-spacing:0.24px;transform:scaleX(1.1);color:#343741;">0.89114999771118...</span>
<span class="t" style="left:1335.26px;top:446px;font-size:16.5px;letter-spacing:0.03px;transform:scaleX(1.1);color:#000;-webkit-text-stroke:0.15px #000;">0.30425384640693...</span>
<span class="t" style="left:1527.26px;top:446px;font-size:16.5px;letter-spacing:0.03px;transform:scaleX(1.1);color:#343741;">0.88620001077651...</span>
<span class="t" style="left:1719.26px;top:446px;font-size:16.5px;letter-spacing:0.03px;transform:scaleX(1.1);color:#343741;">0.30425384640693...</span>
<span class="t" style="left:227.81px;top:492px;font-size:14.3px;letter-spacing:0.14px;transform:scaleX(1.1);color:#535966;">25</span>
<span class="i" style="left:263.6px;top:494.76px"><svg width="5" height="14" viewBox="0 0 5 14" fill="none" ><rect x=".900" y=".600" width="3.200" height="3.200" rx=".350" stroke="#343741" stroke-width="1" stroke-linecap="round" stroke-linejoin="round"/><rect x=".900" y="5.400" width="3.200" height="3.200" rx=".350" stroke="#343741" stroke-width="1" stroke-linecap="round" stroke-linejoin="round"/><rect x=".900" y="10.200" width="3.200" height="3.200" rx=".350" stroke="#343741" stroke-width="1" stroke-linecap="round" stroke-linejoin="round"/></svg></span>
<div class="bx cb" style="left:289.8px;top:492.86px;width:17.9px;height:17.6px;"></div>
<span class="i" style="left:322px;top:496.06px"><svg width="16" height="12" viewBox="0 0 16 12" fill="none" ><path d="M1.200 6.500l4.300 4.300L14.800 1.200" stroke="#1c8c80" stroke-width="1.15" stroke-linecap="round" stroke-linejoin="round"/></svg></span>
<span class="t" style="left:348.96px;top:492px;font-size:16.5px;letter-spacing:0.39px;transform:scaleX(1.1);color:#535966;">304f84ffb</span>
<span class="i" style="left:453.5px;top:493.36px"><svg width="16" height="16" viewBox="0 0 16 16" fill="none" ><path d="M13.200 9.500v4a1.500 1.500 0 0 1-1.500 1.500" stroke="#0b72c4" stroke-width="1.2" stroke-linecap="round" stroke-linejoin="round"/><path d="M11.700 15H2.500" stroke="#3f9fb0" stroke-width="1.3" stroke-linecap="round" stroke-linejoin="round"/><path d="M2.500 15A1.500 1.500 0 0 1 1 13.500v-9A1.500 1.500 0 0 1 2.500 3H6.500" stroke="#0b72c4" stroke-width="1.2" stroke-linecap="round" stroke-linejoin="round"/><path d="M10 1h5v5M15 1L7.200 8.800" stroke="#0b72c4" stroke-width="1.2" stroke-linecap="round" stroke-linejoin="round"/></svg></span>
<span class="i" style="left:481.9px;top:495.21px"><svg width="15" height="13.5" viewBox="0 0 15 13.5" fill="none" ><path d="M.600 3.900H8M4.900 .700L8.300 3.900 4.900 7.100M14.400 9.700H7M10.100 6.500L6.700 9.700l3.400 3.200" stroke="#1c8c80" stroke-width="1.25" stroke-linecap="round" stroke-linejoin="round"/></svg></span>
<span class="i" style="left:509.3px;top:493.96px"><svg width="16" height="16" viewBox="0 0 16 16" fill="none" ><path d="M8 1.500l1.950 4.300 4.650.500-3.450 3.200.950 4.600L8 11.800l-4.100 2.300.950-4.600L1.400 6.300l4.650-.500z" stroke="#343741" stroke-width="1.15" stroke-linecap="round" stroke-linejoin="round"/></svg></span>
<span class="i" style="left:539.4px;top:493.56px"><svg width="12" height="16" viewBox="0 0 12 16" fill="none" ><path d="M3.500 1h5M4 1v5.500L2 9h8L8 6.500V1M6 9v6" stroke="#343741" stroke-width="1.1" stroke-linecap="round" stroke-linejoin="round"/></svg></span>
<span class="t" style="left:685.42px;top:492px;font-size:16.5px;letter-spacing:-0.15px;transform:scaleX(1.0861);">2h 39m</span>
<span class="i" style="left:664.22px;top:496.06px"><svg width="14" height="13" viewBox="0 0 14 13" fill="none" ><path d="M7 12.200V1.200M1 7l6-5.900L13 7" stroke="#1c8c80" stroke-width="1.2" stroke-linecap="round" stroke-linejoin="round"/></svg></span>
<span class="t" style="left:868.2px;top:492px;font-size:16.5px;letter-spacing:-0.15px;transform:scaleX(1.0857);">26m 53s</span>
<span class="i" style="left:847px;top:496.06px"><svg width="14" height="13" viewBox="0 0 14 13" fill="none" ><path d="M7 12.200V1.200M1 7l6-5.900L13 7" stroke="#1c8c80" stroke-width="1.2" stroke-linecap="round" stroke-linejoin="round"/></svg></span>
<span class="i" style="left:953px;top:496.06px"><svg width="14" height="13" viewBox="0 0 14 13" fill="none" ><path d="M7 12.200V1.200M1 7l6-5.900L13 7" stroke="#1c8c80" stroke-width="1.2" stroke-linecap="round" stroke-linejoin="round"/></svg></span>
<span class="t" style="left:974.26px;top:492px;font-size:16.5px;transform:scaleX(1.1);color:#343741;">0.317903071641...</span>
<span class="i" style="left:1145px;top:496.46px"><svg width="14" height="13" viewBox="0 0 14 13" fill="none" ><path d="M7 .800v11M1 6l6 5.900L13 6" stroke="#d14b34" stroke-width="1.2" stroke-linecap="round" stroke-linejoin="round"/></svg></span>
<span class="t" style="left:1166.26px;top:492px;font-size:16.5px;transform:scaleX(1.1);color:#343741;">0.878983318805...</span>
<span class="i" style="left:1337.2px;top:496.06px"><svg width="14" height="13" viewBox="0 0 14 13" fill="none" ><path d="M7 12.200V1.200M1 7l6-5.900L13 7" stroke="#1c8c80" stroke-width="1.2" stroke-linecap="round" stroke-linejoin="round"/></svg></span>
<span class="t" style="left:1358.46px;top:492px;font-size:16.5px;transform:scaleX(1.1);color:#000;-webkit-text-stroke:0.15px #000;">0.309849500656...</span>
<span class="i" style="left:1529.2px;top:496.06px"><svg width="14" height="13" viewBox="0 0 14 13" fill="none" ><path d="M7 12.200V1.200M1 7l6-5.900L13 7" stroke="#1c8c80" stroke-width="1.2" stroke-linecap="round" stroke-linejoin="round"/></svg></span>
<span class="t" style="left:1550.46px;top:492px;font-size:16.5px;transform:scaleX(1.1);color:#343741;">0.886500000953...</span>
<span class="i" style="left:1721.2px;top:496.06px"><svg width="14" height="13" viewBox="0 0 14 13" fill="none" ><path d="M7 12.200V1.200M1 7l6-5.900L13 7" stroke="#1c8c80" stroke-width="1.2" stroke-linecap="round" stroke-linejoin="round"/></svg></span>
<span class="t" style="left:1742.46px;top:492px;font-size:16.5px;transform:scaleX(1.1);color:#343741;">0.309849500656...</span>
<span class="t" style="left:227.81px;top:538px;font-size:14.3px;letter-spacing:0.14px;transform:scaleX(1.1);color:#535966;">26</span>
<span class="i" style="left:263.6px;top:540.25px"><svg width="5" height="14" viewBox="0 0 5 14" fill="none" ><rect x=".900" y=".600" width="3.200" height="3.200" rx=".350" stroke="#343741" stroke-width="1" stroke-linecap="round" stroke-linejoin="round"/><rect x=".900" y="5.400" width="3.200" height="3.200" rx=".350" stroke="#343741" stroke-width="1" stroke-linecap="round" stroke-linejoin="round"/><rect x=".900" y="10.200" width="3.200" height="3.200" rx=".350" stroke="#343741" stroke-width="1" stroke-linecap="round" stroke-linejoin="round"/></svg></span>
<div class="bx cb" style="left:289.8px;top:538.35px;width:17.9px;height:17.6px;"></div>
<span class="i" style="left:322px;top:541.55px"><svg width="16" height="12" viewBox="0 0 16 12" fill="none" ><path d="M1.200 6.500l4.300 4.300L14.800 1.200" stroke="#1c8c80" stroke-width="1.15" stroke-linecap="round" stroke-linejoin="round"/></svg></span>
<span class="t" style="left:348.87px;top:537px;font-size:16.5px;letter-spacing:-0.01px;transform:scaleX(1.1);color:#535966;">e07899100</span>
<span class="i" style="left:453.5px;top:538.85px"><svg width="16" height="16" viewBox="0 0 16 16" fill="none" ><path d="M13.200 9.500v4a1.500 1.500 0 0 1-1.500 1.500" stroke="#0b72c4" stroke-width="1.2" stroke-linecap="round" stroke-linejoin="round"/><path d="M11.700 15H2.500" stroke="#3f9fb0" stroke-width="1.3" stroke-linecap="round" stroke-linejoin="round"/><path d="M2.500 15A1.500 1.500 0 0 1 1 13.500v-9A1.500 1.500 0 0 1 2.500 3H6.500" stroke="#0b72c4" stroke-width="1.2" stroke-linecap="round" stroke-linejoin="round"/><path d="M10 1h5v5M15 1L7.200 8.800" stroke="#0b72c4" stroke-width="1.2" stroke-linecap="round" stroke-linejoin="round"/></svg></span>
<span class="i" style="left:481.9px;top:540.7px"><svg width="15" height="13.5" viewBox="0 0 15 13.5" fill="none" ><path d="M.600 3.900H8M4.900 .700L8.300 3.900 4.900 7.100M14.400 9.700H7M10.100 6.500L6.700 9.700l3.400 3.200" stroke="#1c8c80" stroke-width="1.25" stroke-linecap="round" stroke-linejoin="round"/></svg></span>
<span class="i" style="left:509.3px;top:539.45px"><svg width="16" height="16" viewBox="0 0 16 16" fill="none" ><path d="M8 1.500l1.950 4.300 4.650.500-3.450 3.200.950 4.600L8 11.800l-4.100 2.300.950-4.600L1.400 6.300l4.650-.500z" stroke="#343741" stroke-width="1.15" stroke-linecap="round" stroke-linejoin="round"/></svg></span>
<span class="i" style="left:539.4px;top:539.05px"><svg width="12" height="16" viewBox="0 0 12 16" fill="none" ><path d="M3.500 1h5M4 1v5.500L2 9h8L8 6.500V1M6 9v6" stroke="#343741" stroke-width="1.1" stroke-linecap="round" stroke-linejoin="round"/></svg></span>
<span class="t" style="left:676.2px;top:537px;font-size:16.5px;letter-spacing:-0.15px;transform:scaleX(1.0857);">51m 19s</span>
<span class="i" style="left:654.82px;top:541.55px"><svg width="14" height="13" viewBox="0 0 14 13" fill="none" ><path d="M7 12.200V1.200M1 7l6-5.900L13 7" stroke="#1c8c80" stroke-width="1.2" stroke-linecap="round" stroke-linejoin="round"/></svg></span>
<span class="t" style="left:868.21px;top:537px;font-size:16.5px;letter-spacing:-0.15px;transform:scaleX(1.0856);">14m 10s</span>
<span class="i" style="left:847.45px;top:541.95px"><svg width="14" height="13" viewBox="0 0 14 13" fill="none" ><path d="M7 .800v11M1 6l6 5.900L13 6" stroke="#d14b34" stroke-width="1.2" stroke-linecap="round" stroke-linejoin="round"/></svg></span>
<span class="i" style="left:953px;top:541.55px"><svg width="14" height="13" viewBox="0 0 14 13" fill="none" ><path d="M7 12.200V1.200M1 7l6-5.900L13 7" stroke="#1c8c80" stroke-width="1.2" stroke-linecap="round" stroke-linejoin="round"/></svg></span>
<span class="t" style="left:974.26px;top:537px;font-size:16.5px;transform:scaleX(1.1);color:#343741;">0.304833650588...</span>
<span class="i" style="left:1145px;top:541.95px"><svg width="14" height="13" viewBox="0 0 14 13" fill="none" ><path d="M7 .800v11M1 6l6 5.900L13 6" stroke="#d14b34" stroke-width="1.2" stroke-linecap="round" stroke-linejoin="round"/></svg></span>
<span class="t" style="left:1166.26px;top:537px;font-size:16.5px;transform:scaleX(1.1);color:#343741;">0.885466694831...</span>
<span class="i" style="left:1337.2px;top:541.55px"><svg width="14" height="13" viewBox="0 0 14 13" fill="none" ><path d="M7 12.200V1.200M1 7l6-5.900L13 7" stroke="#1c8c80" stroke-width="1.2" stroke-linecap="round" stroke-linejoin="round"/></svg></span>
<span class="t" style="left:1358.46px;top:537px;font-size:16.5px;transform:scaleX(1.1);color:#000;-webkit-text-stroke:0.15px #000;">0.314928770065...</span>
<span class="i" style="left:1529.2px;top:541.95px"><svg width="14" height="13" viewBox="0 0 14 13" fill="none" ><path d="M7 .800v11M1 6l6 5.900L13 6" stroke="#d14b34" stroke-width="1.2" stroke-linecap="round" stroke-linejoin="round"/></svg></span>
<span class="t" style="left:1550.46px;top:537px;font-size:16.5px;transform:scaleX(1.1);color:#343741;">0.883599996566...</span>
<span class="i" style="left:1721.2px;top:541.55px"><svg width="14" height="13" viewBox="0 0 14 13" fill="none" ><path d="M7 12.200V1.200M1 7l6-5.900L13 7" stroke="#1c8c80" stroke-width="1.2" stroke-linecap="round" stroke-linejoin="round"/></svg></span>
<span class="t" style="left:1742.46px;top:537px;font-size:16.5px;transform:scaleX(1.1);color:#343741;">0.314928770065...</span>
<span class="t" style="left:227.81px;top:583px;font-size:14.3px;letter-spacing:0.21px;transform:scaleX(1.1);color:#535966;">27</span>
<span class="i" style="left:263.6px;top:585.74px"><svg width="5" height="14" viewBox="0 0 5 14" fill="none" ><rect x=".900" y=".600" width="3.200" height="3.200" rx=".350" stroke="#343741" stroke-width="1" stroke-linecap="round" stroke-linejoin="round"/><rect x=".900" y="5.400" width="3.200" height="3.200" rx=".350" stroke="#343741" stroke-width="1" stroke-linecap="round" stroke-linejoin="round"/><rect x=".900" y="10.200" width="3.200" height="3.200" rx=".350" stroke="#343741" stroke-width="1" stroke-linecap="round" stroke-linejoin="round"/></svg></span>
<div class="bx cb" style="left:289.8px;top:583.84px;width:17.9px;height:17.6px;"></div>
<span class="i" style="left:322px;top:587.04px"><svg width="16" height="12" viewBox="0 0 16 12" fill="none" ><path d="M1.200 6.500l4.300 4.300L14.800 1.200" stroke="#1c8c80" stroke-width="1.15" stroke-linecap="round" stroke-linejoin="round"/></svg></span>
<span class="t" style="left:348.87px;top:583px;font-size:16.5px;letter-spacing:0.2px;transform:scaleX(1.1);color:#535966;">d611d8842</span>
<span class="i" style="left:453.5px;top:584.34px"><svg width="16" height="16" viewBox="0 0 16 16" fill="none" ><path d="M13.200 9.500v4a1.500 1.500 0 0 1-1.500 1.500" stroke="#0b72c4" stroke-width="1.2" stroke-linecap="round" stroke-linejoin="round"/><path d="M11.700 15H2.500" stroke="#3f9fb0" stroke-width="1.3" stroke-linecap="round" stroke-linejoin="round"/><path d="M2.500 15A1.500 1.500 0 0 1 1 13.500v-9A1.500 1.500 0 0 1 2.500 3H6.500" stroke="#0b72c4" stroke-width="1.2" stroke-linecap="round" stroke-linejoin="round"/><path d="M10 1h5v5M15 1L7.200 8.800" stroke="#0b72c4" stroke-width="1.2" stroke-linecap="round" stroke-linejoin="round"/></svg></span>
<span class="i" style="left:481.9px;top:586.19px"><svg width="15" height="13.5" viewBox="0 0 15 13.5" fill="none" ><path d="M.600 3.900H8M4.900 .700L8.300 3.900 4.900 7.100M14.400 9.700H7M10.100 6.500L6.700 9.700l3.400 3.200" stroke="#1c8c80" stroke-width="1.25" stroke-linecap="round" stroke-linejoin="round"/></svg></span>
<span class="i" style="left:509.3px;top:584.94px"><svg width="16" height="16" viewBox="0 0 16 16" fill="none" ><path d="M8 1.500l1.950 4.300 4.650.500-3.450 3.200.950 4.600L8 11.800l-4.100 2.300.950-4.600L1.400 6.300l4.650-.500z" stroke="#343741" stroke-width="1.15" stroke-linecap="round" stroke-linejoin="round"/></svg></span>
<span class="i" style="left:539.4px;top:584.54px"><svg width="12" height="16" viewBox="0 0 12 16" fill="none" ><path d="M3.500 1h5M4 1v5.500L2 9h8L8 6.500V1M6 9v6" stroke="#343741" stroke-width="1.1" stroke-linecap="round" stroke-linejoin="round"/></svg></span>
<span class="t" style="left:676.21px;top:583px;font-size:16.5px;letter-spacing:-0.15px;transform:scaleX(1.0856);">15m 19s</span>
<span class="i" style="left:655.45px;top:587.04px"><svg width="14" height="13" viewBox="0 0 14 13" fill="none" ><path d="M7 12.200V1.200M1 7l6-5.900L13 7" stroke="#1c8c80" stroke-width="1.2" stroke-linecap="round" stroke-linejoin="round"/></svg></span>
<span class="t" style="left:877.96px;top:583px;font-size:16.5px;letter-spacing:-0.15px;transform:scaleX(1.0861);">30m 3s</span>
<span class="i" style="left:856.49px;top:587.04px"><svg width="14" height="13" viewBox="0 0 14 13" fill="none" ><path d="M7 12.200V1.200M1 7l6-5.900L13 7" stroke="#1c8c80" stroke-width="1.2" stroke-linecap="round" stroke-linejoin="round"/></svg></span>
<span class="i" style="left:953px;top:587.04px"><svg width="14" height="13" viewBox="0 0 14 13" fill="none" ><path d="M7 12.200V1.200M1 7l6-5.900L13 7" stroke="#1c8c80" stroke-width="1.2" stroke-linecap="round" stroke-linejoin="round"/></svg></span>
<span class="t" style="left:974.26px;top:583px;font-size:16.5px;transform:scaleX(1.1);color:#343741;">0.290556848049...</span>
<span class="i" style="left:1145px;top:587.44px"><svg width="14" height="13" viewBox="0 0 14 13" fill="none" ><path d="M7 .800v11M1 6l6 5.900L13 6" stroke="#d14b34" stroke-width="1.2" stroke-linecap="round" stroke-linejoin="round"/></svg></span>
<span class="t" style="left:1166.26px;top:583px;font-size:16.5px;transform:scaleX(1.1);color:#343741;">0.889566659927...</span>
<span class="i" style="left:1337.2px;top:587.04px"><svg width="14" height="13" viewBox="0 0 14 13" fill="none" ><path d="M7 12.200V1.200M1 7l6-5.900L13 7" stroke="#1c8c80" stroke-width="1.2" stroke-linecap="round" stroke-linejoin="round"/></svg></span>
<span class="t" style="left:1358.46px;top:583px;font-size:16.5px;transform:scaleX(1.1);color:#000;-webkit-text-stroke:0.15px #000;">0.322942554950...</span>
<span class="i" style="left:1529.2px;top:587.44px"><svg width="14" height="13" viewBox="0 0 14 13" fill="none" ><path d="M7 .800v11M1 6l6 5.900L13 6" stroke="#d14b34" stroke-width="1.2" stroke-linecap="round" stroke-linejoin="round"/></svg></span>
<span class="t" style="left:1550.46px;top:583px;font-size:16.5px;transform:scaleX(1.1);color:#343741;">0.880400002002...</span>
<span class="i" style="left:1721.2px;top:587.04px"><svg width="14" height="13" viewBox="0 0 14 13" fill="none" ><path d="M7 12.200V1.200M1 7l6-5.900L13 7" stroke="#1c8c80" stroke-width="1.2" stroke-linecap="round" stroke-linejoin="round"/></svg></span>
<span class="t" style="left:1742.46px;top:583px;font-size:16.5px;transform:scaleX(1.1);color:#343741;">0.321900278329...</span>
<span class="t" style="left:227.81px;top:629px;font-size:14.3px;letter-spacing:0.14px;transform:scaleX(1.1);color:#535966;">28</span>
<span class="i" style="left:263.6px;top:631.23px"><svg width="5" height="14" viewBox="0 0 5 14" fill="none" ><rect x=".900" y=".600" width="3.200" height="3.200" rx=".350" stroke="#343741" stroke-width="1" stroke-linecap="round" stroke-linejoin="round"/><rect x=".900" y="5.400" width="3.200" height="3.200" rx=".350" stroke="#343741" stroke-width="1" stroke-linecap="round" stroke-linejoin="round"/><rect x=".900" y="10.200" width="3.200" height="3.200" rx=".350" stroke="#343741" stroke-width="1" stroke-linecap="round" stroke-linejoin="round"/></svg></span>
<div class="bx cb" style="left:289.8px;top:629.33px;width:17.9px;height:17.6px;"></div>
<span class="i" style="left:322px;top:632.53px"><svg width="16" height="12" viewBox="0 0 16 12" fill="none" ><path d="M1.200 6.500l4.300 4.300L14.800 1.200" stroke="#1c8c80" stroke-width="1.15" stroke-linecap="round" stroke-linejoin="round"/></svg></span>
<span class="t" style="left:348.78px;top:628px;font-size:16.5px;letter-spacing:-0.06px;transform:scaleX(1.1);color:#535966;">9cca7608b</span>
<span class="i" style="left:453.5px;top:629.83px"><svg width="16" height="16" viewBox="0 0 16 16" fill="none" ><path d="M13.200 9.500v4a1.500 1.500 0 0 1-1.500 1.500" stroke="#0b72c4" stroke-width="1.2" stroke-linecap="round" stroke-linejoin="round"/><path d="M11.700 15H2.500" stroke="#3f9fb0" stroke-width="1.3" stroke-linecap="round" stroke-linejoin="round"/><path d="M2.500 15A1.500 1.500 0 0 1 1 13.500v-9A1.500 1.500 0 0 1 2.500 3H6.500" stroke="#0b72c4" stroke-width="1.2" stroke-linecap="round" stroke-linejoin="round"/><path d="M10 1h5v5M15 1L7.200 8.800" stroke="#0b72c4" stroke-width="1.2" stroke-linecap="round" stroke-linejoin="round"/></svg></span>
<span class="i" style="left:481.9px;top:631.68px"><svg width="15" height="13.5" viewBox="0 0 15 13.5" fill="none" ><path d="M.600 3.900H8M4.900 .700L8.300 3.900 4.900 7.100M14.400 9.700H7M10.100 6.500L6.700 9.700l3.400 3.200" stroke="#1c8c80" stroke-width="1.25" stroke-linecap="round" stroke-linejoin="round"/></svg></span>
<span class="i" style="left:509.3px;top:630.43px"><svg width="16" height="16" viewBox="0 0 16 16" fill="none" ><path d="M8 1.500l1.950 4.300 4.650.500-3.450 3.200.950 4.600L8 11.800l-4.100 2.300.950-4.600L1.400 6.300l4.650-.500z" stroke="#343741" stroke-width="1.15" stroke-linecap="round" stroke-linejoin="round"/></svg></span>
<span class="i" style="left:539.4px;top:630.03px"><svg width="12" height="16" viewBox="0 0 12 16" fill="none" ><path d="M3.500 1h5M4 1v5.500L2 9h8L8 6.500V1M6 9v6" stroke="#343741" stroke-width="1.1" stroke-linecap="round" stroke-linejoin="round"/></svg></span>
<span class="t" style="left:725.1px;top:628px;font-size:16.5px;letter-spacing:-0.15px;transform:scaleX(1.091);">3s</span>
<span class="i" style="left:703.63px;top:632.93px"><svg width="14" height="13" viewBox="0 0 14 13" fill="none" ><path d="M7 .800v11M1 6l6 5.900L13 6" stroke="#d14b34" stroke-width="1.2" stroke-linecap="round" stroke-linejoin="round"/></svg></span>
<span class="t" style="left:868.21px;top:628px;font-size:16.5px;letter-spacing:-0.15px;transform:scaleX(1.0856);">14m 52s</span>
<span class="i" style="left:847.45px;top:632.93px"><svg width="14" height="13" viewBox="0 0 14 13" fill="none" ><path d="M7 .800v11M1 6l6 5.900L13 6" stroke="#d14b34" stroke-width="1.2" stroke-linecap="round" stroke-linejoin="round"/></svg></span>
<span class="i" style="left:953px;top:632.53px"><svg width="14" height="13" viewBox="0 0 14 13" fill="none" ><path d="M7 12.200V1.200M1 7l6-5.900L13 7" stroke="#1c8c80" stroke-width="1.2" stroke-linecap="round" stroke-linejoin="round"/></svg></span>
<span class="t" style="left:974.26px;top:628px;font-size:16.5px;transform:scaleX(1.1);color:#343741;">0.288655728101...</span>
<span class="i" style="left:1145px;top:632.53px"><svg width="14" height="13" viewBox="0 0 14 13" fill="none" ><path d="M7 12.200V1.200M1 7l6-5.900L13 7" stroke="#1c8c80" stroke-width="1.2" stroke-linecap="round" stroke-linejoin="round"/></svg></span>
<span class="t" style="left:1166.26px;top:628px;font-size:16.5px;transform:scaleX(1.1);color:#343741;">0.894266664981...</span>
<span class="i" style="left:1337.2px;top:632.53px"><svg width="14" height="13" viewBox="0 0 14 13" fill="none" ><path d="M7 12.200V1.200M1 7l6-5.900L13 7" stroke="#1c8c80" stroke-width="1.2" stroke-linecap="round" stroke-linejoin="round"/></svg></span>
<span class="t" style="left:1358.46px;top:628px;font-size:16.5px;transform:scaleX(1.1);color:#000;-webkit-text-stroke:0.15px #000;">0.343179166316...</span>
<span class="i" style="left:1529.2px;top:632.93px"><svg width="14" height="13" viewBox="0 0 14 13" fill="none" ><path d="M7 .800v11M1 6l6 5.900L13 6" stroke="#d14b34" stroke-width="1.2" stroke-linecap="round" stroke-linejoin="round"/></svg></span>
<span class="t" style="left:1550.46px;top:628px;font-size:16.5px;transform:scaleX(1.1);color:#343741;">0.884899973869...</span>
<span class="i" style="left:1721.2px;top:632.53px"><svg width="14" height="13" viewBox="0 0 14 13" fill="none" ><path d="M7 12.200V1.200M1 7l6-5.900L13 7" stroke="#1c8c80" stroke-width="1.2" stroke-linecap="round" stroke-linejoin="round"/></svg></span>
<span class="t" style="left:1742.46px;top:628px;font-size:16.5px;transform:scaleX(1.1);color:#343741;">0.322066694498...</span>
<span class="t" style="left:227.81px;top:674px;font-size:14.3px;letter-spacing:0.21px;transform:scaleX(1.1);color:#535966;">29</span>
<span class="i" style="left:263.6px;top:676.72px"><svg width="5" height="14" viewBox="0 0 5 14" fill="none" ><rect x=".900" y=".600" width="3.200" height="3.200" rx=".350" stroke="#343741" stroke-width="1" stroke-linecap="round" stroke-linejoin="round"/><rect x=".900" y="5.400" width="3.200" height="3.200" rx=".350" stroke="#343741" stroke-width="1" stroke-linecap="round" stroke-linejoin="round"/><rect x=".900" y="10.200" width="3.200" height="3.200" rx=".350" stroke="#343741" stroke-width="1" stroke-linecap="round" stroke-linejoin="round"/></svg></span>
<div class="bx cb" style="left:289.8px;top:674.82px;width:17.9px;height:17.6px;"></div>
<span class="i" style="left:322px;top:678.02px"><svg width="16" height="12" viewBox="0 0 16 12" fill="none" ><path d="M1.200 6.500l4.300 4.300L14.800 1.200" stroke="#1c8c80" stroke-width="1.15" stroke-linecap="round" stroke-linejoin="round"/></svg></span>
<span class="t" style="left:348.87px;top:674px;font-size:16.5px;letter-spacing:-0.11px;transform:scaleX(1.1);color:#535966;">d8ca21d85</span>
<span class="i" style="left:453.5px;top:675.32px"><svg width="16" height="16" viewBox="0 0 16 16" fill="none" ><path d="M13.200 9.500v4a1.500 1.500 0 0 1-1.500 1.500" stroke="#0b72c4" stroke-width="1.2" stroke-linecap="round" stroke-linejoin="round"/><path d="M11.700 15H2.500" stroke="#3f9fb0" stroke-width="1.3" stroke-linecap="round" stroke-linejoin="round"/><path d="M2.500 15A1.500 1.500 0 0 1 1 13.500v-9A1.500 1.500 0 0 1 2.500 3H6.500" stroke="#0b72c4" stroke-width="1.2" stroke-linecap="round" stroke-linejoin="round"/><path d="M10 1h5v5M15 1L7.200 8.800" stroke="#0b72c4" stroke-width="1.2" stroke-linecap="round" stroke-linejoin="round"/></svg></span>
<span class="i" style="left:481.9px;top:677.17px"><svg width="15" height="13.5" viewBox="0 0 15 13.5" fill="none" ><path d="M.600 3.900H8M4.900 .700L8.300 3.900 4.900 7.100M14.400 9.700H7M10.100 6.500L6.700 9.700l3.400 3.200" stroke="#1c8c80" stroke-width="1.25" stroke-linecap="round" stroke-linejoin="round"/></svg></span>
<span class="i" style="left:509.3px;top:675.92px"><svg width="16" height="16" viewBox="0 0 16 16" fill="none" ><path d="M8 1.500l1.950 4.300 4.650.500-3.450 3.200.950 4.600L8 11.800l-4.100 2.300.950-4.600L1.400 6.300l4.650-.500z" stroke="#343741" stroke-width="1.15" stroke-linecap="round" stroke-linejoin="round"/></svg></span>
<span class="i" style="left:539.4px;top:675.52px"><svg width="12" height="16" viewBox="0 0 12 16" fill="none" ><path d="M3.500 1h5M4 1v5.500L2 9h8L8 6.500V1M6 9v6" stroke="#343741" stroke-width="1.1" stroke-linecap="round" stroke-linejoin="round"/></svg></span>
<span class="t" style="left:676.2px;top:674px;font-size:16.5px;letter-spacing:-0.15px;transform:scaleX(1.0858);">45m 29s</span>
<span class="i" style="left:654.46px;top:678.02px"><svg width="14" height="13" viewBox="0 0 14 13" fill="none" ><path d="M7 12.200V1.200M1 7l6-5.900L13 7" stroke="#1c8c80" stroke-width="1.2" stroke-linecap="round" stroke-linejoin="round"/></svg></span>
<span class="t" style="left:868.21px;top:674px;font-size:16.5px;letter-spacing:-0.15px;transform:scaleX(1.0856);">14m 51s</span>
<span class="i" style="left:847.45px;top:678.42px"><svg width="14" height="13" viewBox="0 0 14 13" fill="none" ><path d="M7 .800v11M1 6l6 5.900L13 6" stroke="#d14b34" stroke-width="1.2" stroke-linecap="round" stroke-linejoin="round"/></svg></span>
<span class="i" style="left:953px;top:678.02px"><svg width="14" height="13" viewBox="0 0 14 13" fill="none" ><path d="M7 12.200V1.200M1 7l6-5.900L13 7" stroke="#1c8c80" stroke-width="1.2" stroke-linecap="round" stroke-linejoin="round"/></svg></span>
<span class="t" style="left:974.26px;top:674px;font-size:16.5px;transform:scaleX(1.1);color:#343741;">0.373267769813...</span>
<span class="i" style="left:1145px;top:678.42px"><svg width="14" height="13" viewBox="0 0 14 13" fill="none" ><path d="M7 .800v11M1 6l6 5.900L13 6" stroke="#d14b34" stroke-width="1.2" stroke-linecap="round" stroke-linejoin="round"/></svg></span>
<span class="t" style="left:1166.26px;top:674px;font-size:16.5px;transform:scaleX(1.1);color:#343741;">0.860033333301...</span>
<span class="i" style="left:1337.2px;top:678.02px"><svg width="14" height="13" viewBox="0 0 14 13" fill="none" ><path d="M7 12.200V1.200M1 7l6-5.900L13 7" stroke="#1c8c80" stroke-width="1.2" stroke-linecap="round" stroke-linejoin="round"/></svg></span>
<span class="t" style="left:1358.46px;top:674px;font-size:16.5px;transform:scaleX(1.1);color:#000;-webkit-text-stroke:0.15px #000;">0.351222872734...</span>
<span class="i" style="left:1529.2px;top:678.42px"><svg width="14" height="13" viewBox="0 0 14 13" fill="none" ><path d="M7 .800v11M1 6l6 5.900L13 6" stroke="#d14b34" stroke-width="1.2" stroke-linecap="round" stroke-linejoin="round"/></svg></span>
<span class="t" style="left:1550.46px;top:674px;font-size:16.5px;transform:scaleX(1.1);color:#343741;">0.867900013923...</span>
<span class="i" style="left:1721.2px;top:678.02px"><svg width="14" height="13" viewBox="0 0 14 13" fill="none" ><path d="M7 12.200V1.200M1 7l6-5.900L13 7" stroke="#1c8c80" stroke-width="1.2" stroke-linecap="round" stroke-linejoin="round"/></svg></span>
<span class="t" style="left:1742.46px;top:674px;font-size:16.5px;transform:scaleX(1.1);color:#343741;">0.351222872734...</span>
<span class="t" style="left:228.05px;top:720px;font-size:14.3px;letter-spacing:-0.14px;transform:scaleX(1.1);color:#535966;">30</span>
<span class="i" style="left:263.6px;top:722.21px"><svg width="5" height="14" viewBox="0 0 5 14" fill="none" ><rect x=".900" y=".600" width="3.200" height="3.200" rx=".350" stroke="#343741" stroke-width="1" stroke-linecap="round" stroke-linejoin="round"/><rect x=".900" y="5.400" width="3.200" height="3.200" rx=".350" stroke="#343741" stroke-width="1" stroke-linecap="round" stroke-linejoin="round"/><rect x=".900" y="10.200" width="3.200" height="3.200" rx=".350" stroke="#343741" stroke-width="1" stroke-linecap="round" stroke-linejoin="round"/></svg></span>
<div class="bx cb" style="left:289.8px;top:720.31px;width:17.9px;height:17.6px;"></div>
<span class="i" style="left:322px;top:723.51px"><svg width="16" height="12" viewBox="0 0 16 12" fill="none" ><path d="M1.200 6.500l4.300 4.300L14.800 1.200" stroke="#1c8c80" stroke-width="1.15" stroke-linecap="round" stroke-linejoin="round"/></svg></span>
<span class="t" style="left:348.87px;top:719px;font-size:16.5px;letter-spacing:-0.08px;transform:scaleX(1.1);color:#535966;">a2044147b</span>
<span class="i" style="left:453.5px;top:720.81px"><svg width="16" height="16" viewBox="0 0 16 16" fill="none" ><path d="M13.200 9.500v4a1.500 1.500 0 0 1-1.500 1.500" stroke="#0b72c4" stroke-width="1.2" stroke-linecap="round" stroke-linejoin="round"/><path d="M11.700 15H2.500" stroke="#3f9fb0" stroke-width="1.3" stroke-linecap="round" stroke-linejoin="round"/><path d="M2.500 15A1.500 1.500 0 0 1 1 13.500v-9A1.500 1.500 0 0 1 2.500 3H6.500" stroke="#0b72c4" stroke-width="1.2" stroke-linecap="round" stroke-linejoin="round"/><path d="M10 1h5v5M15 1L7.200 8.800" stroke="#0b72c4" stroke-width="1.2" stroke-linecap="round" stroke-linejoin="round"/></svg></span>
<span class="i" style="left:481.9px;top:722.66px"><svg width="15" height="13.5" viewBox="0 0 15 13.5" fill="none" ><path d="M.600 3.900H8M4.900 .700L8.300 3.900 4.900 7.100M14.400 9.700H7M10.100 6.500L6.700 9.700l3.400 3.200" stroke="#1c8c80" stroke-width="1.25" stroke-linecap="round" stroke-linejoin="round"/></svg></span>
<span class="i" style="left:509.3px;top:721.41px"><svg width="16" height="16" viewBox="0 0 16 16" fill="none" ><path d="M8 1.500l1.950 4.300 4.650.500-3.450 3.200.950 4.600L8 11.800l-4.100 2.300.950-4.600L1.400 6.300l4.650-.500z" stroke="#343741" stroke-width="1.15" stroke-linecap="round" stroke-linejoin="round"/></svg></span>
<span class="i" style="left:539.4px;top:721.01px"><svg width="12" height="16" viewBox="0 0 12 16" fill="none" ><path d="M3.500 1h5M4 1v5.500L2 9h8L8 6.500V1M6 9v6" stroke="#343741" stroke-width="1.1" stroke-linecap="round" stroke-linejoin="round"/></svg></span>
<span class="t" style="left:715.35px;top:719px;font-size:16.5px;letter-spacing:-0.15px;transform:scaleX(1.0881);">12s</span>
<span class="i" style="left:694.6px;top:723.91px"><svg width="14" height="13" viewBox="0 0 14 13" fill="none" ><path d="M7 .800v11M1 6l6 5.900L13 6" stroke="#d14b34" stroke-width="1.2" stroke-linecap="round" stroke-linejoin="round"/></svg></span>
<span class="t" style="left:877.97px;top:719px;font-size:16.5px;letter-spacing:-0.15px;transform:scaleX(1.0859);">16m 3s</span>
<span class="i" style="left:857.22px;top:723.51px"><svg width="14" height="13" viewBox="0 0 14 13" fill="none" ><path d="M7 12.200V1.200M1 7l6-5.900L13 7" stroke="#1c8c80" stroke-width="1.2" stroke-linecap="round" stroke-linejoin="round"/></svg></span>
<span class="i" style="left:953px;top:723.51px"><svg width="14" height="13" viewBox="0 0 14 13" fill="none" ><path d="M7 12.200V1.200M1 7l6-5.900L13 7" stroke="#1c8c80" stroke-width="1.2" stroke-linecap="round" stroke-linejoin="round"/></svg></span>
<span class="t" style="left:974.26px;top:719px;font-size:16.5px;transform:scaleX(1.1);color:#343741;">0.379169851541...</span>
<span class="i" style="left:1145px;top:723.91px"><svg width="14" height="13" viewBox="0 0 14 13" fill="none" ><path d="M7 .800v11M1 6l6 5.900L13 6" stroke="#d14b34" stroke-width="1.2" stroke-linecap="round" stroke-linejoin="round"/></svg></span>
<span class="t" style="left:1166.26px;top:719px;font-size:16.5px;transform:scaleX(1.1);color:#343741;">0.856649994850...</span>
<span class="i" style="left:1337.2px;top:723.51px"><svg width="14" height="13" viewBox="0 0 14 13" fill="none" ><path d="M7 12.200V1.200M1 7l6-5.900L13 7" stroke="#1c8c80" stroke-width="1.2" stroke-linecap="round" stroke-linejoin="round"/></svg></span>
<span class="t" style="left:1358.46px;top:719px;font-size:16.5px;transform:scaleX(1.1);color:#000;-webkit-text-stroke:0.15px #000;">0.357482373714...</span>
<span class="i" style="left:1529.2px;top:723.91px"><svg width="14" height="13" viewBox="0 0 14 13" fill="none" ><path d="M7 .800v11M1 6l6 5.900L13 6" stroke="#d14b34" stroke-width="1.2" stroke-linecap="round" stroke-linejoin="round"/></svg></span>
<span class="t" style="left:1550.46px;top:719px;font-size:16.5px;transform:scaleX(1.1);color:#343741;">0.869899988174...</span>
<span class="i" style="left:1721.2px;top:723.51px"><svg width="14" height="13" viewBox="0 0 14 13" fill="none" ><path d="M7 12.200V1.200M1 7l6-5.900L13 7" stroke="#1c8c80" stroke-width="1.2" stroke-linecap="round" stroke-linejoin="round"/></svg></span>
<span class="t" style="left:1742.46px;top:719px;font-size:16.5px;transform:scaleX(1.1);color:#343741;">0.357482373714...</span>
<span class="t" style="left:229.24px;top:1020px;font-size:16.3px;letter-spacing:-0.15px;transform:scaleX(1.044);">Rows per page: 10</span>
<span class="i" style="left:380.3px;top:1023.7px"><svg width="12" height="12" viewBox="0 0 12 12" fill="none" ><path d="M1.500 4l4.500 4.500L10.500 4" stroke="#343741" stroke-width="1.2" stroke-linecap="round" stroke-linejoin="round"/></svg></span>
<span class="i" style="left:1669.5px;top:1021.6px"><svg width="10" height="16" viewBox="0 0 10 16" fill="none" ><path d="M8 1.500L1.500 8 8 14.500" stroke="#343741" stroke-width="1.3" stroke-linecap="round" stroke-linejoin="round"/></svg></span>
<span class="i" style="left:1885.3px;top:1021.6px"><svg width="10" height="16" viewBox="0 0 10 16" fill="none" ><path d="M2 1.500L8.500 8 2 14.500" stroke="#343741" stroke-width="1.3" stroke-linecap="round" stroke-linejoin="round"/></svg></span>
<span class="t" style="left:1698.56px;top:1020px;font-size:16.5px;transform:scaleX(1.08);">1</span>
<span class="t" style="left:1728.31px;top:1020px;font-size:16.5px;transform:scaleX(1.08);">2</span>
<span class="t" style="left:1791.84px;top:1020px;font-size:16.5px;transform:scaleX(1.08);">4</span>
<span class="t" style="left:1823.19px;top:1020px;font-size:16.5px;transform:scaleX(1.08);">5</span>
<span class="t" style="left:1854.61px;top:1020px;font-size:16.5px;transform:scaleX(1.08);">6</span>
<span class="t" style="left:1760.05px;top:1020px;font-size:16.5px;transform:scaleX(1.06);font-weight:bold;color:#0b6fc2;">3</span>
<div class="bx" style="left:1759.5px;top:1036.5px;width:10.8px;height:1.7px;background:#0b6fc2"></div>
<div class="corner bl"></div><div class="corner br"></div>
</div></body></html>
